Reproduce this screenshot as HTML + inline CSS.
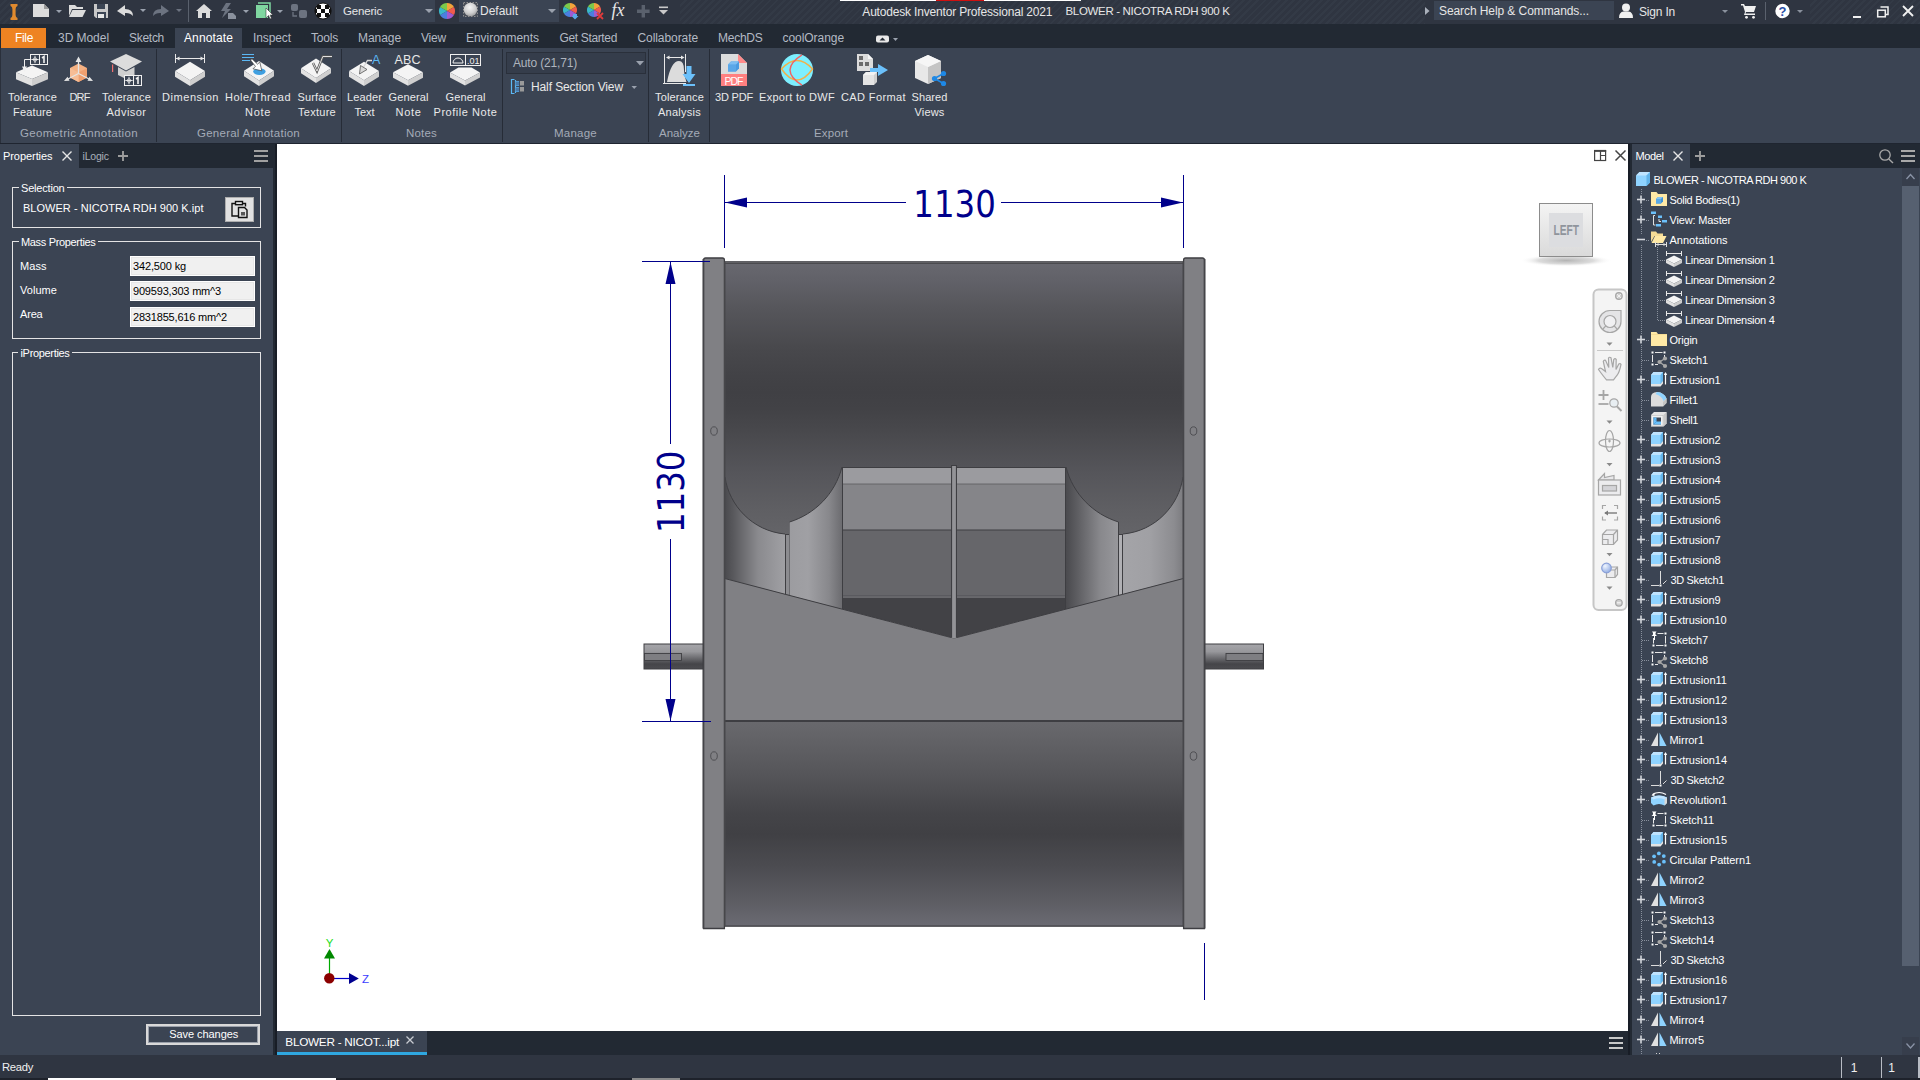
<!DOCTYPE html>
<html lang="en"><head><meta charset="utf-8"><title>Autodesk Inventor Professional 2021 - BLOWER - NICOTRA RDH 900 K</title>
<style>
html,body{margin:0;padding:0;background:#3b4453;overflow:hidden}
body{width:1920px;height:1080px;position:relative;font-family:"Liberation Sans",sans-serif}
.t{position:absolute;white-space:nowrap;display:block}
.r{position:absolute;display:block}
svg text{font-family:"Liberation Sans",sans-serif}
</style></head>
<body>
<div class="r" style="left:0px;top:0px;width:1920px;height:24px;background:#2f3541;"></div>
<div class="r" style="left:0;top:0;width:30px;height:24px;background:repeating-linear-gradient(135deg,#2f3541 0 3px,#333a46 3px 5px)"></div>
<div class="r" style="left:680px;top:0;width:745px;height:24px;background:repeating-linear-gradient(135deg,#2f3541 0 3px,#333a46 3px 5px)"></div>
<div class="r" style="left:1810px;top:0;width:110px;height:24px;background:repeating-linear-gradient(135deg,#2f3541 0 3px,#333a46 3px 5px)"></div>
<div class="r" style="left:840px;top:0px;width:241px;height:1px;background:#ffffff;"></div>
<div class="r" style="left:936px;top:0px;width:48px;height:1px;background:#d01010;"></div>
<svg class="r" style="left:0px;top:0px;" width="700" height="24" viewBox="0 0 700 24">
<g>
<path d="M10.5 4 H17.5 V6 Q15.6 6.6 15.6 9 V15 Q15.6 17.4 17.5 18 V20 H10.5 V18 Q12.4 17.4 12.4 15 V9 Q12.4 6.6 10.5 6Z" fill="#e08a2e"/>
<path d="M33 4 H44 L49 9 V17 H33Z" fill="#dcdcdc"/><path d="M44 4 L49 9 H44Z" fill="#9a9a9a"/>
<path d="M56 10 H62 L59 13Z" fill="#9aa1ad"/>
<path d="M69 5 H75 L77 7 H83 V9 H72 L69 16Z" fill="#dcdcdc"/><path d="M72.5 10 H86 L82.5 17 H69Z" fill="#dcdcdc"/>
<path d="M94 4 H108 V18 H96 L94 16Z" fill="#c8c8c8"/><rect x="97" y="4" width="8" height="5" fill="#3b4453"/><rect x="97" y="12" width="9" height="6" fill="#3b4453"/><rect x="98" y="14" width="6" height="4" fill="#e6e6e6"/>
<path d="M117 11 L125 5 V9 Q133 9 133 16 Q130 12.5 125 13 V16Z" fill="#dcdcdc"/>
<path d="M140 9 H146 L143 12Z" fill="#9aa1ad"/>
<path d="M169 11 L161 5 V9 Q153 9 153 16 Q156 12.5 161 13 V16Z" fill="#6c7380"/>
<path d="M176 9 H182 L179 12Z" fill="#6c7380"/>
<rect x="188" y="0" width="1" height="22" fill="#5a616d"/>
<path d="M196 11 L204 4 L212 11 H210 V18 H206 V13 H202 V18 H198 V11Z" fill="#dcdcdc"/>
<path d="M226 3 H231 L227 9 H231 L222 18 L225 11 H221Z" fill="#6c7380"/><path d="M228 13 H233 L236 16 V19 H228Z" fill="#8a919d"/>
<path d="M243 10 H249 L246 13Z" fill="#9aa1ad"/>
<rect x="256" y="5" width="12" height="13" fill="#7fd6a0"/><path d="M258 3 H270 V16" stroke="#7fd6a0" fill="none" stroke-width="1.5"/>
<path d="M266 8 L266 18 L268.5 15.5 L270 19 L271.5 18.3 L270 15 L273 15Z" fill="#ffffff" stroke="#222" stroke-width="0.5"/>
<path d="M277 10 H283 L280 13Z" fill="#9aa1ad"/>
<rect x="291" y="4" width="7" height="7" rx="2" fill="#6c7380"/><rect x="299" y="10" width="8" height="8" rx="2" fill="#6c7380"/><path d="M293 12 V16 H297" stroke="#6c7380" fill="none" stroke-width="1.3"/>
<circle cx="323" cy="11" r="8" fill="#ffffff"/><circle cx="323" cy="11" r="8" fill="none" stroke="#111" stroke-width="1.2"/>
<g fill="#111"><rect x="317" y="5" width="4" height="4"/><rect x="325" y="5" width="4" height="4"/><rect x="321" y="9" width="4" height="4"/><rect x="317" y="13" width="4" height="4"/><rect x="325" y="13" width="4" height="4"/><rect x="315" y="9" width="2" height="4"/><rect x="329" y="9" width="2" height="4"/></g>
</g></svg>
<div class="r" style="left:335px;top:0px;width:100px;height:22px;background:#3b4453;"></div>
<span class="t" style="left:343.00px;top:5.77px;font-size:11.5px;line-height:11.5px;color:#e6e6e6;letter-spacing:-0.181px;">Generic</span>
<div class="r" style="left:459px;top:0px;width:100px;height:22px;background:#3b4453;"></div>
<span class="t" style="left:480.00px;top:5.34px;font-size:12px;line-height:12px;color:#e6e6e6;letter-spacing:-0.003px;">Default</span>
<svg class="r" style="left:420px;top:0px;" width="250" height="24" viewBox="420 0 250 24">
<path d="M425 9 H433 L429 13Z" fill="#9aa1ad"/>
<g transform="translate(447,11)">
<path d="M0 0 L0 -8 A8 8 0 0 1 6.93 -4Z" fill="#f2a33a"/>
<path d="M0 0 L6.93 -4 A8 8 0 0 1 6.93 4Z" fill="#ef5b4c"/>
<path d="M0 0 L6.93 4 A8 8 0 0 1 0 8Z" fill="#a05ad0"/>
<path d="M0 0 L0 8 A8 8 0 0 1 -6.93 4Z" fill="#4a7fe0"/>
<path d="M0 0 L-6.93 4 A8 8 0 0 1 -6.93 -4Z" fill="#39b8c8"/>
<path d="M0 0 L-6.93 -4 A8 8 0 0 1 0 -8Z" fill="#7cc84a"/>
</g>
<defs><radialGradient id="gDef" cx="0.45" cy="0.35" r="0.7"><stop offset="0" stop-color="#f4f4f4"/><stop offset="0.6" stop-color="#cfcfcf"/><stop offset="1" stop-color="#9a9a9a"/></radialGradient></defs><rect x="463.500" y="2.500" width="14" height="14" fill="#4a4f58" stroke="#8e8e8e" stroke-width="1" stroke-dasharray="1.500 1.500"/><circle cx="470.500" cy="9.500" r="6.800" fill="url(#gDef)"/>
<path d="M548 9 H556 L552 13Z" fill="#9aa1ad"/>
<g transform="translate(570,10)">
<path d="M0 0 L0 -7 A7 7 0 0 1 6.06 -3.5Z" fill="#f2a33a"/><path d="M0 0 L6.06 -3.5 A7 7 0 0 1 6.06 3.5Z" fill="#ef5b4c"/><path d="M0 0 L6.06 3.5 A7 7 0 0 1 0 7Z" fill="#a05ad0"/><path d="M0 0 L0 7 A7 7 0 0 1 -6.06 3.5Z" fill="#4a7fe0"/><path d="M0 0 L-6.06 3.5 A7 7 0 0 1 -6.06 -3.5Z" fill="#39b8c8"/><path d="M0 0 L-6.06 -3.5 A7 7 0 0 1 0 -7Z" fill="#7cc84a"/>
</g>
<path d="M573 14 H577 V16 H578.5 L575 19.5 L571.5 16 H573Z" fill="#5aa7e8"/>
<g transform="translate(594,10)">
<path d="M0 0 L0 -7 A7 7 0 0 1 6.06 -3.5Z" fill="#f2a33a"/><path d="M0 0 L6.06 -3.5 A7 7 0 0 1 6.06 3.5Z" fill="#ef5b4c"/><path d="M0 0 L6.06 3.5 A7 7 0 0 1 0 7Z" fill="#a05ad0"/><path d="M0 0 L0 7 A7 7 0 0 1 -6.06 3.5Z" fill="#4a7fe0"/><path d="M0 0 L-6.06 3.5 A7 7 0 0 1 -6.06 -3.5Z" fill="#39b8c8"/><path d="M0 0 L-6.06 -3.5 A7 7 0 0 1 0 -7Z" fill="#7cc84a"/>
</g>
<path d="M597 13 L603 19 M603 13 L597 19" stroke="#e03a3a" stroke-width="1.8"/>
<text x="611.500" y="16" font-size="18" style="font-family:&quot;Liberation Serif&quot;,serif;font-style:italic" fill="#e6e6e6">fx</text>
<path d="M637 9.600 H641.600 V5 H645 V9.600 H649.600 V13 H645 V17.600 H641.600 V13 H637Z" fill="#5a616d"/>
<rect x="659" y="6.500" width="9" height="1.600" fill="#c9c9c9"/><path d="M659 10 H668 L663.500 14.500Z" fill="#c9c9c9"/>
</svg>
<span class="t" style="left:862.30px;top:5.84px;font-size:12px;line-height:12px;color:#e6e6e6;letter-spacing:-0.175px;">Autodesk Inventor Professional 2021</span>
<span class="t" style="left:1065.50px;top:6.27px;font-size:11.5px;line-height:11.5px;color:#e6e6e6;letter-spacing:-0.328px;">BLOWER - NICOTRA RDH 900 K</span>
<div class="r" style="left:1434px;top:1px;width:180px;height:19px;background:#3b4453;"></div>
<span class="t" style="left:1439.00px;top:4.84px;font-size:12px;line-height:12px;color:#e6e6e6;letter-spacing:-0.083px;">Search Help &amp; Commands...</span>
<span class="t" style="left:1639.00px;top:5.84px;font-size:12px;line-height:12px;color:#e6e6e6;letter-spacing:-0.195px;">Sign In</span>
<svg class="r" style="left:1415px;top:0px;" width="505" height="24" viewBox="1415 0 505 24">
<path d="M1425 7 L1429.5 11 L1425 15Z" fill="#aab0bb"/>
<circle cx="1626" cy="7.5" r="4" fill="#f0f0f0"/><path d="M1619 18 Q1619 12 1623.5 11.5 H1628.5 Q1633 12 1633 18Z" fill="#f0f0f0"/>
<path d="M1722 10 H1728 L1725 13Z" fill="#8a919d"/>
<path d="M1741 4 H1744 L1745 6 H1756 L1754 12 H1746 L1745.5 13.5 H1755 V15 H1744 L1745 12 L1743 5.5 H1741Z" fill="#f0f0f0"/><circle cx="1746.5" cy="17.3" r="1.4" fill="#f0f0f0"/><circle cx="1753.5" cy="17.3" r="1.4" fill="#f0f0f0"/>
<rect x="1765" y="2" width="1" height="18" fill="#5a616d"/>
<circle cx="1782.5" cy="11" r="7.2" fill="#ffffff"/>
<text x="1782.5" y="15.6" font-size="13" font-weight="bold" text-anchor="middle" fill="#2b4fa8">?</text>
<path d="M1797 10 H1803 L1800 13Z" fill="#8a919d"/>
<rect x="1853" y="16" width="8" height="2" fill="#f0f0f0"/>
<path d="M1880.5 7 H1888 V14.5 H1885.5" stroke="#f0f0f0" stroke-width="1.5" fill="none"/><rect x="1877.7" y="10.2" width="7.6" height="6.6" stroke="#f0f0f0" stroke-width="1.5" fill="none"/>
<path d="M1903 6 L1913 16 M1913 6 L1903 16" stroke="#f0f0f0" stroke-width="1.9"/>
</svg>
<div class="r" style="left:0px;top:24px;width:1920px;height:24px;background:#222933;"></div>
<div class="r" style="left:1px;top:28px;width:45px;height:20px;background:#ee8322;"></div>
<div class="r" style="left:175px;top:28px;width:67px;height:20px;background:#3b4453;"></div>
<span class="t" style="left:15.00px;top:31.84px;font-size:12px;line-height:12px;color:#ffffff;letter-spacing:-0.334px;">File</span>
<span class="t" style="left:58.00px;top:31.84px;font-size:12px;line-height:12px;color:#b4bac4;letter-spacing:-0.045px;">3D Model</span>
<span class="t" style="left:129.00px;top:31.84px;font-size:12px;line-height:12px;color:#b4bac4;letter-spacing:-0.281px;">Sketch</span>
<span class="t" style="left:184.00px;top:31.84px;font-size:12px;line-height:12px;color:#ffffff;letter-spacing:0.120px;">Annotate</span>
<span class="t" style="left:253.00px;top:31.84px;font-size:12px;line-height:12px;color:#b4bac4;letter-spacing:-0.099px;">Inspect</span>
<span class="t" style="left:311.00px;top:31.84px;font-size:12px;line-height:12px;color:#b4bac4;letter-spacing:-0.203px;">Tools</span>
<span class="t" style="left:358.00px;top:31.84px;font-size:12px;line-height:12px;color:#b4bac4;letter-spacing:-0.061px;">Manage</span>
<span class="t" style="left:421.00px;top:31.84px;font-size:12px;line-height:12px;color:#b4bac4;letter-spacing:-0.199px;">View</span>
<span class="t" style="left:466.00px;top:31.84px;font-size:12px;line-height:12px;color:#b4bac4;letter-spacing:-0.031px;">Environments</span>
<span class="t" style="left:559.50px;top:31.84px;font-size:12px;line-height:12px;color:#b4bac4;letter-spacing:-0.352px;">Get Started</span>
<span class="t" style="left:637.50px;top:31.84px;font-size:12px;line-height:12px;color:#b4bac4;letter-spacing:-0.080px;">Collaborate</span>
<span class="t" style="left:718.00px;top:31.84px;font-size:12px;line-height:12px;color:#b4bac4;letter-spacing:-0.252px;">MechDS</span>
<span class="t" style="left:782.50px;top:31.84px;font-size:12px;line-height:12px;color:#b4bac4;letter-spacing:-0.054px;">coolOrange</span>
<svg class="r" style="left:870px;top:30px;" width="34" height="16" viewBox="0 0 34 16"><rect x="6" y="5.5" width="13" height="7" rx="2" fill="#e8e8e8"/><path d="M9.5 10.5 L12.5 7.5 L15.5 10.5Z" fill="#222933"/><path d="M23 8 L28 8 L25.5 11Z" fill="#9aa1ad"/></svg>
<div class="r" style="left:0px;top:48px;width:1920px;height:95px;background:#3b4453;"></div>
<div class="r" style="left:0px;top:48px;width:1px;height:95px;background:#2a303b;"></div>
<div class="r" style="left:0px;top:143px;width:1920px;height:1px;background:#1f2530;"></div>
<div class="r" style="left:156px;top:49px;width:1px;height:93px;background:#262c37;"></div>
<div class="r" style="left:341px;top:49px;width:1px;height:93px;background:#262c37;"></div>
<div class="r" style="left:502px;top:49px;width:1px;height:93px;background:#262c37;"></div>
<div class="r" style="left:648px;top:49px;width:1px;height:93px;background:#262c37;"></div>
<div class="r" style="left:709px;top:49px;width:1px;height:93px;background:#262c37;"></div>
<span class="t" style="left:8.00px;top:91.59px;font-size:11px;line-height:11px;color:#e9e9e9;letter-spacing:0.145px;">Tolerance</span>
<span class="t" style="left:13.00px;top:106.59px;font-size:11px;line-height:11px;color:#e9e9e9;letter-spacing:0.156px;">Feature</span>
<span class="t" style="left:69.50px;top:91.59px;font-size:11px;line-height:11px;color:#e9e9e9;letter-spacing:-0.869px;">DRF</span>
<span class="t" style="left:102.00px;top:91.59px;font-size:11px;line-height:11px;color:#e9e9e9;letter-spacing:0.145px;">Tolerance</span>
<span class="t" style="left:106.50px;top:106.59px;font-size:11px;line-height:11px;color:#e9e9e9;letter-spacing:0.474px;">Advisor</span>
<span class="t" style="left:162.00px;top:91.59px;font-size:11px;line-height:11px;color:#e9e9e9;letter-spacing:0.559px;">Dimension</span>
<span class="t" style="left:225.00px;top:91.59px;font-size:11px;line-height:11px;color:#e9e9e9;letter-spacing:0.497px;">Hole/Thread</span>
<span class="t" style="left:245.00px;top:106.59px;font-size:11px;line-height:11px;color:#e9e9e9;letter-spacing:0.691px;">Note</span>
<span class="t" style="left:297.50px;top:91.59px;font-size:11px;line-height:11px;color:#e9e9e9;letter-spacing:0.156px;">Surface</span>
<span class="t" style="left:298.00px;top:106.59px;font-size:11px;line-height:11px;color:#e9e9e9;letter-spacing:0.275px;">Texture</span>
<span class="t" style="left:347.00px;top:91.59px;font-size:11px;line-height:11px;color:#e9e9e9;letter-spacing:0.124px;">Leader</span>
<span class="t" style="left:354.50px;top:106.59px;font-size:11px;line-height:11px;color:#e9e9e9;letter-spacing:-0.044px;">Text</span>
<span class="t" style="left:388.50px;top:91.59px;font-size:11px;line-height:11px;color:#e9e9e9;letter-spacing:0.124px;">General</span>
<span class="t" style="left:395.50px;top:106.59px;font-size:11px;line-height:11px;color:#e9e9e9;letter-spacing:0.691px;">Note</span>
<span class="t" style="left:445.50px;top:91.59px;font-size:11px;line-height:11px;color:#e9e9e9;letter-spacing:0.124px;">General</span>
<span class="t" style="left:433.50px;top:106.59px;font-size:11px;line-height:11px;color:#e9e9e9;letter-spacing:0.544px;">Profile Note</span>
<span class="t" style="left:655.00px;top:91.59px;font-size:11px;line-height:11px;color:#e9e9e9;letter-spacing:0.145px;">Tolerance</span>
<span class="t" style="left:658.00px;top:106.59px;font-size:11px;line-height:11px;color:#e9e9e9;letter-spacing:0.255px;">Analysis</span>
<span class="t" style="left:715.00px;top:91.59px;font-size:11px;line-height:11px;color:#e9e9e9;letter-spacing:-0.186px;">3D PDF</span>
<span class="t" style="left:759.00px;top:91.59px;font-size:11px;line-height:11px;color:#e9e9e9;letter-spacing:0.298px;">Export to DWF</span>
<span class="t" style="left:841.00px;top:91.59px;font-size:11px;line-height:11px;color:#e9e9e9;letter-spacing:0.388px;">CAD Format</span>
<span class="t" style="left:911.50px;top:91.59px;font-size:11px;line-height:11px;color:#e9e9e9;letter-spacing:0.088px;">Shared</span>
<span class="t" style="left:914.50px;top:106.59px;font-size:11px;line-height:11px;color:#e9e9e9;letter-spacing:0.171px;">Views</span>
<span class="t" style="left:20.00px;top:127.67px;font-size:11.5px;line-height:11.5px;color:#a4abb7;letter-spacing:0.370px;">Geometric Annotation</span>
<span class="t" style="left:197.00px;top:127.67px;font-size:11.5px;line-height:11.5px;color:#a4abb7;letter-spacing:0.252px;">General Annotation</span>
<span class="t" style="left:406.00px;top:127.67px;font-size:11.5px;line-height:11.5px;color:#a4abb7;letter-spacing:0.192px;">Notes</span>
<span class="t" style="left:554.00px;top:127.67px;font-size:11.5px;line-height:11.5px;color:#a4abb7;letter-spacing:0.240px;">Manage</span>
<span class="t" style="left:659.00px;top:127.67px;font-size:11.5px;line-height:11.5px;color:#a4abb7;letter-spacing:0.012px;">Analyze</span>
<span class="t" style="left:814.00px;top:127.67px;font-size:11.5px;line-height:11.5px;color:#a4abb7;letter-spacing:0.127px;">Export</span>
<div class="r" style="left:506px;top:52px;width:140px;height:22px;background:#2a303b;"></div>
<div class="r" style="left:507px;top:53px;width:138px;height:20px;background:#353d4b;"></div>
<span class="t" style="left:513.00px;top:57.34px;font-size:12px;line-height:12px;color:#aeb4be;letter-spacing:-0.170px;">Auto (21,71)</span>
<span class="t" style="left:531.00px;top:80.84px;font-size:12px;line-height:12px;color:#e9e9e9;letter-spacing:-0.108px;">Half Section View</span>
<svg class="r" style="left:500px;top:48px;" width="160" height="60" viewBox="500 48 160 60">
<path d="M636 61 H644 L640 65.5Z" fill="#9aa1ad"/>
<path d="M631.5 86 H637 L634.2 89Z" fill="#9aa1ad"/>
<g stroke="#5bb8f5" stroke-width="1.2" fill="none"><path d="M514.5 79.5 H511.5 V93.5 H514.5"/><path d="M515.5 80 V93"/><path d="M515.5 81.5 H518.5 V85.5 H515.5M515.5 87.5 H518.5 V91.5 H515.5"/></g>
<rect x="515.5" y="81.5" width="3.5" height="4" fill="#4a78a8"/><rect x="515.5" y="87.5" width="3.5" height="4" fill="#4a78a8"/>
<rect x="520" y="81" width="4" height="4.5" fill="#9a9a9a"/><rect x="520" y="87" width="4" height="4.5" fill="#9a9a9a"/>
</svg>
<svg class="r" style="left:0px;top:48px;" width="960" height="95" viewBox="0 48 960 95"><path d="M32 65.5 L48 72.25 L32 79 L16 72.25Z" fill="#f4f4f4"/><path d="M16 72.25 L32 79 V86 L16 79.25Z" fill="#e2e2e2"/><path d="M32 79 L48 72.25 V79.25 L32 86Z" fill="#cfcfcf"/><g stroke="#f0f0f0" fill="none" stroke-width="1"><rect x="30.5" y="54.5" width="17" height="10"/><path d="M39.5 54.5 V64.5"/><path d="M30.5 59.5 H24.5 V69"/><circle cx="35" cy="59.5" r="1.700" stroke-width="0.800"/><path d="M35 55.800 V63.200M31.300 59.5 H38.700" stroke-width="0.900"/><path d="M42 58 L44 56.500 V63" stroke-width="1.600"/></g><path d="M22 66.5 H27 L24.5 72Z" fill="#f0f0f0"/><path d="M78.5 63.5 L87 68 V77.5 L78.5 82 L70 77.5 V68Z" fill="#f4b183"/><path d="M78.5 72.5 L87 68 V77.5 L78.5 82Z" fill="#f0a070"/><path d="M78.5 72.5 L70 68 V77.5 L78.5 82Z" fill="#f7bd95"/><g stroke="#e4e4e4" stroke-width="1.3" fill="none"><path d="M78.5 73.5 V60M78.5 73.5 L67 79.5M78.5 73.5 L90 79.5"/></g><path d="M78.5 56.5 L81.5 62 H75.5Z M64 81 L67.5 76.8 L69.5 80.8Z M93 81 L89.5 76.8 L87.5 80.8Z" fill="#e4e4e4"/><path d="M126 54 L142 61.5 L126 70.5 L110 61.5Z" fill="#dcdcdc"/><path d="M118 67 V75 L126 79 L134.5 75 V67 L126 71.5Z" fill="#d0d0d0"/><rect x="112" y="64.5" width="1.2" height="7.5" fill="#f07070"/><g stroke="#f0f0f0" fill="#3b4453" stroke-width="1"><rect x="124.5" y="75.5" width="17" height="10"/><path d="M133.5 75.5 V85.5"/><circle cx="129" cy="80.5" r="1.700" stroke-width="0.800"/><path d="M129 76.800 V84.200M125.300 80.5 H132.700" stroke-width="0.900"/><path d="M136 79 L138 77.500 V84" stroke-width="1.600"/></g><path d="M190 61.75 L205 71.05 L190 80.35 L175 71.05Z" fill="#f4f4f4"/><path d="M175 71.05 L190 80.35 V85.95 L175 76.65Z" fill="#e2e2e2"/><path d="M190 80.35 L205 71.05 V76.65 L190 85.95Z" fill="#cfcfcf"/><g stroke="#e8e8e8" stroke-width="1" fill="none"><path d="M175.5 54 V63M204.5 54 V63M176 58.5 H204"/></g><path d="M176 58.5 L179.5 56.5 V60.5Z M204 58.5 L200.500 56.5 V60.5Z" fill="#e8e8e8"/><path d="M259 61 L274 70.7 L259 80.4 L244 70.7Z" fill="#f4f4f4"/><path d="M244 70.7 L259 80.4 V86 L244 76.3Z" fill="#e2e2e2"/><path d="M259 80.4 L274 70.7 V76.3 L259 86Z" fill="#cfcfcf"/><ellipse cx="259.400" cy="71.600" rx="6.200" ry="3.400" fill="#3f9fe0"/><g stroke="#5bb8f5" stroke-width="1"><path d="M242 54.5 H254M242 57.5 H254M242 60.5 H250"/></g><path d="M250.500 60 L252 58.800 L257.600 64.200 L259.800 62 L261.800 70.800 L253 68.800 L255.400 66.400 Z" fill="#ffffff" stroke="#444" stroke-width="0.700"/><path d="M316 58.6 L331 68.3 L316 78 L301 68.3Z" fill="#f4f4f4"/><path d="M301 68.3 L316 78 V83 L301 73.3Z" fill="#e2e2e2"/><path d="M316 78 L331 68.3 V73.3 L316 83Z" fill="#cfcfcf"/><path d="M313 63 L317 71.200 L322.800 56.500 H332" stroke="#555" stroke-width="2.400" fill="none"/><path d="M313 63 L317 71.200 L322.800 56.500 H332" stroke="#f0f0f0" stroke-width="0.900" fill="none"/><path d="M364 61.75 L379 71.05 L364 80.35 L349 71.05Z" fill="#f4f4f4"/><path d="M349 71.05 L364 80.35 V85.95 L349 76.65Z" fill="#e2e2e2"/><path d="M364 80.35 L379 71.05 V76.65 L364 85.95Z" fill="#cfcfcf"/><path d="M372 60.500 H367.500 L363 68" stroke="#d8d8d8" stroke-width="1.300" fill="none"/><path d="M359.500 74 L360.500 65.500 L367 69.500Z" fill="#d8d8d8" stroke="#555" stroke-width="0.800"/><text x="372" y="63.5" font-size="12.5" fill="#5bb8f5">A</text><text x="394.5" y="63.5" font-size="12.5" fill="#e8e8e8" textLength="26">ABC</text><path d="M408 64.25 L423 72.25 L408 80.25 L393 72.25Z" fill="#f4f4f4"/><path d="M393 72.25 L408 80.25 V85.85 L393 77.85Z" fill="#e2e2e2"/><path d="M408 80.25 L423 72.25 V77.85 L408 85.85Z" fill="#cfcfcf"/><path d="M458.500 67.400 H471.500 L480 72.400 L465 80.500 L450 72.400Z" fill="#f4f4f4"/><path d="M450 72.400 L465 80.500 V85.500 L450 77.400Z" fill="#e2e2e2"/><path d="M480 72.400 L465 80.500 V85.500 L480 77.400Z" fill="#cfcfcf"/><g stroke="#f0f0f0" fill="none" stroke-width="1"><rect x="450.500" y="54.5" width="30" height="11"/><path d="M465.500 54.5 V65.5"/><path d="M453 63 A5 5 0 0 1 463 63Z"/></g><text x="467" y="63.8" font-size="9" fill="#f0f0f0" textLength="12.5">.01</text><path d="M667 82 Q671 61 679 61 Q684 61 684 70 Q684 76 686.5 82Z" fill="#dcdcdc"/><g stroke="#e8e8e8" stroke-width="1" fill="none"><path d="M664.500 54 V83M685.500 54 V72M663 83.5 H686M667 57.500 H683"/></g><path d="M666 57.5 L669.5 55.500 V59.5Z M684.500 57.5 L681 55.5 V59.5Z" fill="#e8e8e8"/><path d="M686.500 66 H691.500 V74 H695.5 L689 83 L682.5 74 H686.500Z" fill="#6bc0fa"/><rect x="683" y="84" width="12" height="2" fill="#6bc0fa"/><path d="M721 54 H738 L747 63 V86 H721Z" fill="#dcdcdc"/><path d="M738 54 L747 63 H738Z" fill="#ff8a8a"/><rect x="721" y="74" width="26" height="12" fill="#ff8080"/><text x="734" y="84.5" font-size="10.5" fill="#ffffff" text-anchor="middle" textLength="19">PDF</text><path d="M728 64.5 L731 61.5 H739 V68.500 L736 71.500 H728Z" fill="#4a9ae0"/><path d="M728 64.500 H736 V71.500 H728Z" fill="#5aa7e8"/><path d="M728 64.500 L731 61.5 H739 L736 64.500Z" fill="#7cbdf2"/><circle cx="797" cy="70" r="16" fill="#7defff"/><path d="M781.500 69 Q797 52 812.500 69 Q797 91 781.500 69Z" fill="none" stroke="#f2b04a" stroke-width="1.500"/><path d="M802 54.800 Q778 70 802 85.200" fill="none" stroke="#f06464" stroke-width="1.500"/><path d="M805 56.500 Q800 62 803 67" fill="none" stroke="#f06464" stroke-width="0.010"/><path d="M857 54 H868 L873 59 V71 H857Z" fill="#dcdcdc"/><path d="M868 54 L873 59 H868Z" fill="#f6f6f6"/><g fill="#6a6a6a"><rect x="859" y="56" width="4" height="4"/><rect x="859" y="62" width="4" height="4"/><rect x="865" y="62" width="4" height="4"/></g><path d="M863 75 L866 72 H877 V82 L874 85 H863Z" fill="#cfcfcf"/><rect x="863" y="75" width="11" height="10" fill="#e4e4e4"/><path d="M863 75 L866 72 H877 L874 75Z" fill="#f2f2f2"/><path d="M870 68 H878 V64 L888 70 L878 76 V72 H870Z" fill="#6bc0fa"/><path d="M928 55 L941 61 V78 L928 84 L915 78 V61Z" fill="#e8e8e8"/><path d="M928 67 L941 61 V78 L928 84Z" fill="#c4c4c4"/><path d="M928 67 L915 61 L928 55 L941 61Z" fill="#f6f6f6"/><g stroke="#1e88e5" stroke-width="1.6" fill="none"><path d="M943.5 73.500 L934.500 78.5 L943.500 83.5"/></g><circle cx="943.5" cy="73.5" r="2.6" fill="#1e88e5"/><circle cx="934.500" cy="78.5" r="2.6" fill="#1e88e5"/><circle cx="943.5" cy="83.5" r="2.6" fill="#1e88e5"/></svg>
<div class="r" style="left:0px;top:144px;width:273px;height:911px;background:#3b4453;"></div>
<div class="r" style="left:273px;top:144px;width:2px;height:911px;background:#222933;"></div>
<div class="r" style="left:275px;top:144px;width:2px;height:911px;background:#181d26;"></div>
<div class="r" style="left:0px;top:144px;width:273px;height:24px;background:#222933;"></div>
<div class="r" style="left:0px;top:144px;width:79px;height:24px;background:#3b4453;"></div>
<span class="t" style="left:3.00px;top:150.69px;font-size:11px;line-height:11px;color:#ffffff;letter-spacing:-0.064px;">Properties</span>
<span class="t" style="left:82.50px;top:151.11px;font-size:10.5px;line-height:10.5px;color:#a9b0bc;letter-spacing:-0.206px;">iLogic</span>
<svg class="r" style="left:55px;top:146px;" width="80" height="20" viewBox="0 0 80 20"><path d="M7.5 5.500 L16.5 14.5 M16.5 5.5 L7.5 14.5" stroke="#e6e6e6" stroke-width="1.4"/><path d="M63 10 H73 M68 5 V15" stroke="#9c9c9c" stroke-width="1.900"/></svg>
<div class="r" style="left:254px;top:150px;width:14px;height:2px;background:#a0a0a0;"></div>
<div class="r" style="left:254px;top:155px;width:14px;height:2px;background:#a0a0a0;"></div>
<div class="r" style="left:254px;top:160px;width:14px;height:2px;background:#a0a0a0;"></div>
<div class="r" style="left:12px;top:187px;width:249px;height:41px;border:1px solid #e4e4e4;box-sizing:border-box"></div>
<div class="r" style="left:19px;top:187px;width:48px;height:1px;background:#3b4453;"></div>
<span class="t" style="left:21.00px;top:182.69px;font-size:11px;line-height:11px;color:#ffffff;letter-spacing:-0.195px;">Selection</span>
<div class="r" style="left:12px;top:241px;width:249px;height:98px;border:1px solid #e4e4e4;box-sizing:border-box"></div>
<div class="r" style="left:19px;top:241px;width:79px;height:1px;background:#3b4453;"></div>
<span class="t" style="left:21.00px;top:236.69px;font-size:11px;line-height:11px;color:#ffffff;letter-spacing:-0.332px;">Mass Properties</span>
<div class="r" style="left:12px;top:352px;width:249px;height:664px;border:1px solid #e4e4e4;box-sizing:border-box"></div>
<div class="r" style="left:18px;top:352px;width:54px;height:1px;background:#3b4453;"></div>
<span class="t" style="left:20.50px;top:347.69px;font-size:11px;line-height:11px;color:#ffffff;letter-spacing:-0.325px;">iProperties</span>
<span class="t" style="left:23.00px;top:202.69px;font-size:11px;line-height:11px;color:#ffffff;letter-spacing:0.026px;">BLOWER - NICOTRA RDH 900 K.ipt</span>
<div class="r" style="left:225px;top:197px;width:29px;height:25px;background:#e1e1e1;border:1px solid #adadad;box-sizing:border-box"></div>
<svg class="r" style="left:225px;top:197px;" width="29" height="25" viewBox="0 0 29 25"><g fill="none" stroke="#111" stroke-width="1.4"><path d="M11 6.500 H7 V19 H13"/><path d="M17 6.500 H20.5 V9.500"/><rect x="10.5" y="4.5" width="7" height="3.200" fill="#e1e1e1"/><path d="M13.5 10.500 H19.5 L22 13 V20.500 H13.5Z" fill="#e1e1e1"/></g><rect x="16" y="15" width="4" height="3.500" fill="#555"/></svg>
<span class="t" style="left:20.00px;top:260.69px;font-size:11px;line-height:11px;color:#ffffff;letter-spacing:0.055px;">Mass</span>
<div class="r" style="left:130px;top:256px;width:125px;height:20px;background:#f0f0f0;border:1px solid #ffffff;box-sizing:border-box;box-shadow:inset 0 0 0 1px #e6e6e6"></div>
<span class="t" style="left:133.00px;top:260.69px;font-size:11px;line-height:11px;color:#000000;letter-spacing:-0.144px;">342,500 kg</span>
<span class="t" style="left:20.00px;top:284.69px;font-size:11px;line-height:11px;color:#ffffff;letter-spacing:0.052px;">Volume</span>
<div class="r" style="left:130px;top:281px;width:125px;height:20px;background:#f0f0f0;border:1px solid #ffffff;box-sizing:border-box;box-shadow:inset 0 0 0 1px #e6e6e6"></div>
<span class="t" style="left:133.00px;top:285.69px;font-size:11px;line-height:11px;color:#000000;letter-spacing:-0.185px;">909593,303 mm^3</span>
<span class="t" style="left:20.00px;top:308.69px;font-size:11px;line-height:11px;color:#ffffff;letter-spacing:-0.184px;">Area</span>
<div class="r" style="left:130px;top:307px;width:125px;height:20px;background:#f0f0f0;border:1px solid #ffffff;box-sizing:border-box;box-shadow:inset 0 0 0 1px #e6e6e6"></div>
<span class="t" style="left:133.00px;top:311.69px;font-size:11px;line-height:11px;color:#000000;letter-spacing:-0.181px;">2831855,616 mm^2</span>
<div class="r" style="left:146px;top:1024px;width:114px;height:21px;border:2px solid #d9d9d9;box-sizing:border-box;background:#3b4453;box-shadow:inset 0 0 0 1px #9aa0aa"></div>
<span class="t" style="left:169.20px;top:1028.69px;font-size:11px;line-height:11px;color:#ffffff;letter-spacing:-0.060px;">Save changes</span>
<div class="r" style="left:1628px;top:144px;width:2px;height:911px;background:#181d26;"></div>
<div class="r" style="left:1630px;top:144px;width:2px;height:911px;background:#222933;"></div>
<div class="r" style="left:1632px;top:144px;width:288px;height:911px;background:#3b4453;"></div>
<div class="r" style="left:1632px;top:144px;width:288px;height:24px;background:#222933;"></div>
<div class="r" style="left:1632px;top:144px;width:58px;height:24px;background:#3b4453;"></div>
<span class="t" style="left:1635.60px;top:150.69px;font-size:11px;line-height:11px;color:#ffffff;letter-spacing:-0.432px;">Model</span>
<svg class="r" style="left:1632px;top:144px;" width="288" height="24" viewBox="1632 144 288 24"><path d="M1673.500 151.500 L1682.500 160.500 M1682.500 151.500 L1673.500 160.500" stroke="#e6e6e6" stroke-width="1.4"/><path d="M1695 156 H1705 M1700 151 V161" stroke="#9c9c9c" stroke-width="1.900"/><circle cx="1885" cy="155" r="5.200" fill="none" stroke="#a8a8a8" stroke-width="1.3"/><path d="M1888.800 159 L1893 163" stroke="#a8a8a8" stroke-width="1.4"/></svg>
<div class="r" style="left:1901px;top:150px;width:14px;height:2px;background:#a8a8a8;"></div>
<div class="r" style="left:1901px;top:155px;width:14px;height:2px;background:#a8a8a8;"></div>
<div class="r" style="left:1901px;top:160px;width:14px;height:2px;background:#a8a8a8;"></div>
<div class="r" style="left:1902px;top:168px;width:17px;height:18px;background:#373e4c;"></div>
<div class="r" style="left:1902px;top:186px;width:17px;height:780px;background:#566070;"></div>
<svg class="r" style="left:1902px;top:168px;" width="17" height="18" viewBox="0 0 17 18"><path d="M4.500 11 L8.500 6.500 L12.500 11" fill="none" stroke="#8a93a6" stroke-width="1.3"/></svg>
<div class="r" style="left:1902px;top:1037px;width:17px;height:18px;background:#373e4c;"></div>
<svg class="r" style="left:1902px;top:1037px;" width="17" height="18" viewBox="0 0 17 18"><path d="M4.500 6.500 L8.500 11 L12.500 6.500" fill="none" stroke="#8a93a6" stroke-width="1.3"/></svg>
<span class="t" style="left:1653.50px;top:174.69px;font-size:11px;line-height:11px;color:#ffffff;letter-spacing:-0.463px;">BLOWER - NICOTRA RDH 900 K</span>
<span class="t" style="left:1669.50px;top:194.69px;font-size:11px;line-height:11px;color:#ffffff;letter-spacing:-0.306px;">Solid Bodies(1)</span>
<span class="t" style="left:1669.50px;top:214.69px;font-size:11px;line-height:11px;color:#ffffff;letter-spacing:-0.156px;">View: Master</span>
<span class="t" style="left:1669.50px;top:234.69px;font-size:11px;line-height:11px;color:#ffffff;letter-spacing:-0.009px;">Annotations</span>
<span class="t" style="left:1685.00px;top:254.69px;font-size:11px;line-height:11px;color:#ffffff;letter-spacing:-0.293px;">Linear Dimension 1</span>
<span class="t" style="left:1685.00px;top:274.69px;font-size:11px;line-height:11px;color:#ffffff;letter-spacing:-0.293px;">Linear Dimension 2</span>
<span class="t" style="left:1685.00px;top:294.69px;font-size:11px;line-height:11px;color:#ffffff;letter-spacing:-0.293px;">Linear Dimension 3</span>
<span class="t" style="left:1685.00px;top:314.69px;font-size:11px;line-height:11px;color:#ffffff;letter-spacing:-0.293px;">Linear Dimension 4</span>
<span class="t" style="left:1669.50px;top:334.69px;font-size:11px;line-height:11px;color:#ffffff;letter-spacing:-0.224px;">Origin</span>
<span class="t" style="left:1669.50px;top:354.69px;font-size:11px;line-height:11px;color:#ffffff;letter-spacing:-0.178px;">Sketch1</span>
<span class="t" style="left:1669.50px;top:374.69px;font-size:11px;line-height:11px;color:#ffffff;letter-spacing:-0.097px;">Extrusion1</span>
<span class="t" style="left:1669.50px;top:394.69px;font-size:11px;line-height:11px;color:#ffffff;letter-spacing:-0.120px;">Fillet1</span>
<span class="t" style="left:1669.50px;top:414.69px;font-size:11px;line-height:11px;color:#ffffff;letter-spacing:-0.346px;">Shell1</span>
<span class="t" style="left:1669.50px;top:434.69px;font-size:11px;line-height:11px;color:#ffffff;letter-spacing:-0.097px;">Extrusion2</span>
<span class="t" style="left:1669.50px;top:454.69px;font-size:11px;line-height:11px;color:#ffffff;letter-spacing:-0.097px;">Extrusion3</span>
<span class="t" style="left:1669.50px;top:474.69px;font-size:11px;line-height:11px;color:#ffffff;letter-spacing:-0.097px;">Extrusion4</span>
<span class="t" style="left:1669.50px;top:494.69px;font-size:11px;line-height:11px;color:#ffffff;letter-spacing:-0.097px;">Extrusion5</span>
<span class="t" style="left:1669.50px;top:514.69px;font-size:11px;line-height:11px;color:#ffffff;letter-spacing:-0.097px;">Extrusion6</span>
<span class="t" style="left:1669.50px;top:534.69px;font-size:11px;line-height:11px;color:#ffffff;letter-spacing:-0.097px;">Extrusion7</span>
<span class="t" style="left:1669.50px;top:554.69px;font-size:11px;line-height:11px;color:#ffffff;letter-spacing:-0.097px;">Extrusion8</span>
<span class="t" style="left:1670.50px;top:574.69px;font-size:11px;line-height:11px;color:#ffffff;letter-spacing:-0.336px;">3D Sketch1</span>
<span class="t" style="left:1669.50px;top:594.69px;font-size:11px;line-height:11px;color:#ffffff;letter-spacing:-0.097px;">Extrusion9</span>
<span class="t" style="left:1669.50px;top:614.69px;font-size:11px;line-height:11px;color:#ffffff;letter-spacing:-0.099px;">Extrusion10</span>
<span class="t" style="left:1669.50px;top:634.69px;font-size:11px;line-height:11px;color:#ffffff;letter-spacing:-0.178px;">Sketch7</span>
<span class="t" style="left:1669.50px;top:654.69px;font-size:11px;line-height:11px;color:#ffffff;letter-spacing:-0.178px;">Sketch8</span>
<span class="t" style="left:1669.50px;top:674.69px;font-size:11px;line-height:11px;color:#ffffff;letter-spacing:0.021px;">Extrusion11</span>
<span class="t" style="left:1669.50px;top:694.69px;font-size:11px;line-height:11px;color:#ffffff;letter-spacing:-0.054px;">Extrusion12</span>
<span class="t" style="left:1669.50px;top:714.69px;font-size:11px;line-height:11px;color:#ffffff;letter-spacing:-0.054px;">Extrusion13</span>
<span class="t" style="left:1669.50px;top:734.69px;font-size:11px;line-height:11px;color:#ffffff;letter-spacing:-0.048px;">Mirror1</span>
<span class="t" style="left:1669.50px;top:754.69px;font-size:11px;line-height:11px;color:#ffffff;letter-spacing:-0.054px;">Extrusion14</span>
<span class="t" style="left:1670.50px;top:774.69px;font-size:11px;line-height:11px;color:#ffffff;letter-spacing:-0.336px;">3D Sketch2</span>
<span class="t" style="left:1669.50px;top:794.69px;font-size:11px;line-height:11px;color:#ffffff;letter-spacing:-0.054px;">Revolution1</span>
<span class="t" style="left:1669.50px;top:814.69px;font-size:11px;line-height:11px;color:#ffffff;letter-spacing:-0.069px;">Sketch11</span>
<span class="t" style="left:1669.50px;top:834.69px;font-size:11px;line-height:11px;color:#ffffff;letter-spacing:-0.054px;">Extrusion15</span>
<span class="t" style="left:1669.50px;top:854.69px;font-size:11px;line-height:11px;color:#ffffff;letter-spacing:-0.061px;">Circular Pattern1</span>
<span class="t" style="left:1669.50px;top:874.69px;font-size:11px;line-height:11px;color:#ffffff;letter-spacing:-0.048px;">Mirror2</span>
<span class="t" style="left:1669.50px;top:894.69px;font-size:11px;line-height:11px;color:#ffffff;letter-spacing:-0.048px;">Mirror3</span>
<span class="t" style="left:1669.50px;top:914.69px;font-size:11px;line-height:11px;color:#ffffff;letter-spacing:-0.171px;">Sketch13</span>
<span class="t" style="left:1669.50px;top:934.69px;font-size:11px;line-height:11px;color:#ffffff;letter-spacing:-0.171px;">Sketch14</span>
<span class="t" style="left:1670.50px;top:954.69px;font-size:11px;line-height:11px;color:#ffffff;letter-spacing:-0.336px;">3D Sketch3</span>
<span class="t" style="left:1669.50px;top:974.69px;font-size:11px;line-height:11px;color:#ffffff;letter-spacing:-0.054px;">Extrusion16</span>
<span class="t" style="left:1669.50px;top:994.69px;font-size:11px;line-height:11px;color:#ffffff;letter-spacing:-0.054px;">Extrusion17</span>
<span class="t" style="left:1669.50px;top:1014.69px;font-size:11px;line-height:11px;color:#ffffff;letter-spacing:-0.048px;">Mirror4</span>
<span class="t" style="left:1669.50px;top:1034.69px;font-size:11px;line-height:11px;color:#ffffff;letter-spacing:-0.048px;">Mirror5</span>
<svg class="r" style="left:1632px;top:168px;" width="270" height="887" viewBox="1632 168 270 887"><path d="M1641.500 189 V1055" stroke="#8a919d" stroke-width="1" stroke-dasharray="1 1"/><path d="M1657.500 247 V320" stroke="#8a919d" stroke-width="1" stroke-dasharray="1 1"/><g transform="translate(1636,171)"><path d="M0 4.500 L3.500 1 H14 V11.500 L10.500 15 H0Z" fill="#8fd3ff"/><path d="M0 4.500 L3.500 1 H14 L10.500 4.500Z" fill="#bfe4ff"/><path d="M10.500 4.500 L14 1 V11.500 L10.500 15Z" fill="#62b4ea"/></g><rect x="1636" y="194" width="11" height="11" fill="#3b4453"/><path d="M1646 200.5 H1650" stroke="#8a919d" stroke-width="1" stroke-dasharray="1 1"/><path d="M1637 199.5 H1645" stroke="#d4d7dc" stroke-width="1.600"/><path d="M1641 195.5 V203.5" stroke="#d4d7dc" stroke-width="1.600"/><g transform="translate(1651,191)"><path d="M0 1 H5.500 L7 3 H16 V15 H0Z" fill="#ffe9a6"/><path d="M5 8 L7 6 H12 V10.500 L10 12.500 H5Z" fill="#3f93d6"/><path d="M5 8 H10 V12.500 H5Z" fill="#5aa9e6"/><path d="M5 8 L7 6 H12 L10 8Z" fill="#86c4f2"/></g><rect x="1636" y="214" width="11" height="11" fill="#3b4453"/><path d="M1646 220.5 H1650" stroke="#8a919d" stroke-width="1" stroke-dasharray="1 1"/><path d="M1637 219.5 H1645" stroke="#d4d7dc" stroke-width="1.600"/><path d="M1641 215.5 V223.5" stroke="#d4d7dc" stroke-width="1.600"/><g transform="translate(1651,211)"><rect x="0" y="0.500" width="5" height="2.500" fill="#6bc0fa"/><rect x="7" y="4.500" width="4" height="2.500" fill="#6bc0fa"/><rect x="11" y="9" width="5" height="2.500" fill="#6bc0fa"/><rect x="5" y="13" width="5" height="2.500" fill="#6bc0fa"/><path d="M4 4.500 H2.500 V14 H4.500" stroke="#e0e0e0" fill="none" stroke-width="1"/><path d="M8 8 V10.500 H10" stroke="#e0e0e0" fill="none" stroke-width="1"/></g><rect x="1636" y="234" width="11" height="11" fill="#3b4453"/><path d="M1646 240.5 H1650" stroke="#8a919d" stroke-width="1" stroke-dasharray="1 1"/><path d="M1637 239.5 H1645" stroke="#d4d7dc" stroke-width="1.600"/><g transform="translate(1651,231)"><path d="M0 0.500 H5 L6.500 2.500 H12 V5 H3.500 L0 11Z" fill="#f5dc96"/><path d="M4 5 H15.500 L12 12 H0.500Z" fill="#ffe9a6"/><g stroke="#e0e0e0" stroke-width="1" fill="none"><path d="M4.500 11 V16M15.500 11 V16M5 13.500 H15"/></g><path d="M5 13.500 L7.500 12 V15Z M15 13.500 L12.500 12 V15Z" fill="#e0e0e0"/></g><path d="M1658 260.5 H1666" stroke="#8a919d" stroke-width="1" stroke-dasharray="1 1"/><g transform="translate(1666,251)"><g stroke="#e8e8e8" stroke-width="1" fill="none"><path d="M0.500 0 V5M15.500 0 V5M1 2.500 H15"/></g><path d="M8 4.500 L16 8.500 L8 12.500 L0 8.500Z" fill="#f4f4f4"/><path d="M0 8.500 L8 12.500 V16 L0 12Z" fill="#e0e0e0"/><path d="M16 8.500 L8 12.500 V16 L16 12Z" fill="#cdcdcd"/></g><path d="M1658 280.5 H1666" stroke="#8a919d" stroke-width="1" stroke-dasharray="1 1"/><g transform="translate(1666,271)"><g stroke="#e8e8e8" stroke-width="1" fill="none"><path d="M0.500 0 V5M15.500 0 V5M1 2.500 H15"/></g><path d="M8 4.500 L16 8.500 L8 12.500 L0 8.500Z" fill="#f4f4f4"/><path d="M0 8.500 L8 12.500 V16 L0 12Z" fill="#e0e0e0"/><path d="M16 8.500 L8 12.500 V16 L16 12Z" fill="#cdcdcd"/></g><path d="M1658 300.5 H1666" stroke="#8a919d" stroke-width="1" stroke-dasharray="1 1"/><g transform="translate(1666,291)"><g stroke="#e8e8e8" stroke-width="1" fill="none"><path d="M0.500 0 V5M15.500 0 V5M1 2.500 H15"/></g><path d="M8 4.500 L16 8.500 L8 12.500 L0 8.500Z" fill="#f4f4f4"/><path d="M0 8.500 L8 12.500 V16 L0 12Z" fill="#e0e0e0"/><path d="M16 8.500 L8 12.500 V16 L16 12Z" fill="#cdcdcd"/></g><path d="M1658 320.5 H1666" stroke="#8a919d" stroke-width="1" stroke-dasharray="1 1"/><g transform="translate(1666,311)"><g stroke="#e8e8e8" stroke-width="1" fill="none"><path d="M0.500 0 V5M15.500 0 V5M1 2.500 H15"/></g><path d="M8 4.500 L16 8.500 L8 12.500 L0 8.500Z" fill="#f4f4f4"/><path d="M0 8.500 L8 12.500 V16 L0 12Z" fill="#e0e0e0"/><path d="M16 8.500 L8 12.500 V16 L16 12Z" fill="#cdcdcd"/></g><rect x="1636" y="334" width="11" height="11" fill="#3b4453"/><path d="M1646 340.5 H1650" stroke="#8a919d" stroke-width="1" stroke-dasharray="1 1"/><path d="M1637 339.5 H1645" stroke="#d4d7dc" stroke-width="1.600"/><path d="M1641 335.5 V343.5" stroke="#d4d7dc" stroke-width="1.600"/><g transform="translate(1651,331)"><path d="M0 1 H5.500 L7 3 H16 V15 H0Z" fill="#ffe9a6"/><path d="M0 3.500 H16" stroke="#f0d48a" stroke-width="0.600"/></g><path d="M1642 360.5 H1650" stroke="#8a919d" stroke-width="1" stroke-dasharray="1 1"/><g transform="translate(1651,351)"><g stroke="#e8e8e8" stroke-width="1" fill="none"><path d="M4 1.500 H11.500 M1.500 4 V11 M13.500 4 V7 M4 13.500 H7"/></g><g fill="#ffffff"><rect x="0.500" y="0.500" width="2" height="2"/><rect x="12.500" y="0.500" width="2" height="2"/><rect x="0.500" y="12.500" width="2" height="2"/></g><path d="M14 7.500 L8.500 11 L14 15" stroke="#a8a8a8" stroke-width="1.300" fill="none"/><circle cx="14" cy="7.500" r="2.100" fill="#a8a8a8"/><circle cx="8.500" cy="11" r="2.100" fill="#a8a8a8"/><circle cx="14" cy="15" r="2.100" fill="#a8a8a8"/></g><rect x="1636" y="374" width="11" height="11" fill="#3b4453"/><path d="M1646 380.5 H1650" stroke="#8a919d" stroke-width="1" stroke-dasharray="1 1"/><path d="M1637 379.5 H1645" stroke="#d4d7dc" stroke-width="1.600"/><path d="M1641 375.5 V383.5" stroke="#d4d7dc" stroke-width="1.600"/><g transform="translate(1651,371)"><path d="M0 4 L2.500 1 H12 V10 L9.500 13 H0Z" fill="#8fd3ff"/><path d="M0 4 L2.500 1 H12 L9.500 4Z" fill="#bfe4ff"/><path d="M9.500 4 L12 1 V10 L9.500 13Z" fill="#62b4ea"/><path d="M0 13 H9.500 L12 10 V12.500 L9.500 15.500 H0Z" fill="#e4e4e4"/><path d="M14.500 2 V13.500" stroke="#fff" stroke-width="1.200"/><path d="M12.800 4 L14.500 1 L16.200 4Z" fill="#fff"/></g><path d="M1642 400.5 H1650" stroke="#8a919d" stroke-width="1" stroke-dasharray="1 1"/><g transform="translate(1651,391)"><path d="M0 6 Q0 1.500 6 1 Q13 1.500 15.500 7.500 V12 L12 15.500 H0Z" fill="#dcdcdc"/><path d="M6 1 Q13 1.500 15.500 7.500 L12.500 10 Q11 5 4.500 3Z" fill="#8fd3ff"/><path d="M12 11 L15.500 7.500 V12 L12 15.500Z" fill="#c4c4c4"/></g><path d="M1642 420.5 H1650" stroke="#8a919d" stroke-width="1" stroke-dasharray="1 1"/><g transform="translate(1651,411)"><path d="M0 4 L3 1 H15.500 V12.500 L12.500 15.500 H0Z" fill="#e6e6e6"/><path d="M12.500 4 L15.500 1 V12.500 L12.500 15.500Z" fill="#c8c8c8"/><rect x="0.500" y="4.500" width="11.500" height="10.500" fill="#f2f2f2" stroke="#bdbdbd" stroke-width="0.600"/><rect x="2.500" y="6.500" width="7.500" height="7" fill="#3b4453"/><path d="M2.500 6.500 H5.500 V10.500 H10 V13.500 H2.500Z" fill="#6bc0fa"/><path d="M2.500 6.500 L5.500 10.500 M2.500 13.500 L5.500 10.500" stroke="#3f93d6" stroke-width="0.500"/></g><rect x="1636" y="434" width="11" height="11" fill="#3b4453"/><path d="M1646 440.5 H1650" stroke="#8a919d" stroke-width="1" stroke-dasharray="1 1"/><path d="M1637 439.5 H1645" stroke="#d4d7dc" stroke-width="1.600"/><path d="M1641 435.5 V443.5" stroke="#d4d7dc" stroke-width="1.600"/><g transform="translate(1651,431)"><path d="M0 4 L2.500 1 H12 V10 L9.500 13 H0Z" fill="#8fd3ff"/><path d="M0 4 L2.500 1 H12 L9.500 4Z" fill="#bfe4ff"/><path d="M9.500 4 L12 1 V10 L9.500 13Z" fill="#62b4ea"/><path d="M0 13 H9.500 L12 10 V12.500 L9.500 15.500 H0Z" fill="#e4e4e4"/><path d="M14.500 2 V13.500" stroke="#fff" stroke-width="1.200"/><path d="M12.800 4 L14.500 1 L16.200 4Z" fill="#fff"/></g><rect x="1636" y="454" width="11" height="11" fill="#3b4453"/><path d="M1646 460.5 H1650" stroke="#8a919d" stroke-width="1" stroke-dasharray="1 1"/><path d="M1637 459.5 H1645" stroke="#d4d7dc" stroke-width="1.600"/><path d="M1641 455.5 V463.5" stroke="#d4d7dc" stroke-width="1.600"/><g transform="translate(1651,451)"><path d="M0 4 L2.500 1 H12 V10 L9.500 13 H0Z" fill="#8fd3ff"/><path d="M0 4 L2.500 1 H12 L9.500 4Z" fill="#bfe4ff"/><path d="M9.500 4 L12 1 V10 L9.500 13Z" fill="#62b4ea"/><path d="M0 13 H9.500 L12 10 V12.500 L9.500 15.500 H0Z" fill="#e4e4e4"/><path d="M14.500 2 V13.500" stroke="#fff" stroke-width="1.200"/><path d="M12.800 4 L14.500 1 L16.200 4Z" fill="#fff"/></g><rect x="1636" y="474" width="11" height="11" fill="#3b4453"/><path d="M1646 480.5 H1650" stroke="#8a919d" stroke-width="1" stroke-dasharray="1 1"/><path d="M1637 479.5 H1645" stroke="#d4d7dc" stroke-width="1.600"/><path d="M1641 475.5 V483.5" stroke="#d4d7dc" stroke-width="1.600"/><g transform="translate(1651,471)"><path d="M0 4 L2.500 1 H12 V10 L9.500 13 H0Z" fill="#8fd3ff"/><path d="M0 4 L2.500 1 H12 L9.500 4Z" fill="#bfe4ff"/><path d="M9.500 4 L12 1 V10 L9.500 13Z" fill="#62b4ea"/><path d="M0 13 H9.500 L12 10 V12.500 L9.500 15.500 H0Z" fill="#e4e4e4"/><path d="M14.500 2 V13.500" stroke="#fff" stroke-width="1.200"/><path d="M12.800 4 L14.500 1 L16.200 4Z" fill="#fff"/></g><rect x="1636" y="494" width="11" height="11" fill="#3b4453"/><path d="M1646 500.5 H1650" stroke="#8a919d" stroke-width="1" stroke-dasharray="1 1"/><path d="M1637 499.5 H1645" stroke="#d4d7dc" stroke-width="1.600"/><path d="M1641 495.5 V503.5" stroke="#d4d7dc" stroke-width="1.600"/><g transform="translate(1651,491)"><path d="M0 4 L2.500 1 H12 V10 L9.500 13 H0Z" fill="#8fd3ff"/><path d="M0 4 L2.500 1 H12 L9.500 4Z" fill="#bfe4ff"/><path d="M9.500 4 L12 1 V10 L9.500 13Z" fill="#62b4ea"/><path d="M0 13 H9.500 L12 10 V12.500 L9.500 15.500 H0Z" fill="#e4e4e4"/><path d="M14.500 2 V13.500" stroke="#fff" stroke-width="1.200"/><path d="M12.800 4 L14.500 1 L16.200 4Z" fill="#fff"/></g><rect x="1636" y="514" width="11" height="11" fill="#3b4453"/><path d="M1646 520.5 H1650" stroke="#8a919d" stroke-width="1" stroke-dasharray="1 1"/><path d="M1637 519.5 H1645" stroke="#d4d7dc" stroke-width="1.600"/><path d="M1641 515.5 V523.5" stroke="#d4d7dc" stroke-width="1.600"/><g transform="translate(1651,511)"><path d="M0 4 L2.500 1 H12 V10 L9.500 13 H0Z" fill="#8fd3ff"/><path d="M0 4 L2.500 1 H12 L9.500 4Z" fill="#bfe4ff"/><path d="M9.500 4 L12 1 V10 L9.500 13Z" fill="#62b4ea"/><path d="M0 13 H9.500 L12 10 V12.500 L9.500 15.500 H0Z" fill="#e4e4e4"/><path d="M14.500 2 V13.500" stroke="#fff" stroke-width="1.200"/><path d="M12.800 4 L14.500 1 L16.200 4Z" fill="#fff"/></g><rect x="1636" y="534" width="11" height="11" fill="#3b4453"/><path d="M1646 540.5 H1650" stroke="#8a919d" stroke-width="1" stroke-dasharray="1 1"/><path d="M1637 539.5 H1645" stroke="#d4d7dc" stroke-width="1.600"/><path d="M1641 535.5 V543.5" stroke="#d4d7dc" stroke-width="1.600"/><g transform="translate(1651,531)"><path d="M0 4 L2.500 1 H12 V10 L9.500 13 H0Z" fill="#8fd3ff"/><path d="M0 4 L2.500 1 H12 L9.500 4Z" fill="#bfe4ff"/><path d="M9.500 4 L12 1 V10 L9.500 13Z" fill="#62b4ea"/><path d="M0 13 H9.500 L12 10 V12.500 L9.500 15.500 H0Z" fill="#e4e4e4"/><path d="M14.500 2 V13.500" stroke="#fff" stroke-width="1.200"/><path d="M12.800 4 L14.500 1 L16.200 4Z" fill="#fff"/></g><rect x="1636" y="554" width="11" height="11" fill="#3b4453"/><path d="M1646 560.5 H1650" stroke="#8a919d" stroke-width="1" stroke-dasharray="1 1"/><path d="M1637 559.5 H1645" stroke="#d4d7dc" stroke-width="1.600"/><path d="M1641 555.5 V563.5" stroke="#d4d7dc" stroke-width="1.600"/><g transform="translate(1651,551)"><path d="M0 4 L2.500 1 H12 V10 L9.500 13 H0Z" fill="#8fd3ff"/><path d="M0 4 L2.500 1 H12 L9.500 4Z" fill="#bfe4ff"/><path d="M9.500 4 L12 1 V10 L9.500 13Z" fill="#62b4ea"/><path d="M0 13 H9.500 L12 10 V12.500 L9.500 15.500 H0Z" fill="#e4e4e4"/><path d="M14.500 2 V13.500" stroke="#fff" stroke-width="1.200"/><path d="M12.800 4 L14.500 1 L16.200 4Z" fill="#fff"/></g><rect x="1636" y="574" width="11" height="11" fill="#3b4453"/><path d="M1646 580.5 H1650" stroke="#8a919d" stroke-width="1" stroke-dasharray="1 1"/><path d="M1637 579.5 H1645" stroke="#d4d7dc" stroke-width="1.600"/><path d="M1641 575.5 V583.5" stroke="#d4d7dc" stroke-width="1.600"/><g transform="translate(1651,571)"><g stroke="#dcdcdc" stroke-width="1" fill="none"><path d="M9.500 0 V13M0 14.500 H8M12 13 L15.500 9.500"/></g><rect x="8.500" y="13.500" width="2" height="2" fill="#fff"/></g><rect x="1636" y="594" width="11" height="11" fill="#3b4453"/><path d="M1646 600.5 H1650" stroke="#8a919d" stroke-width="1" stroke-dasharray="1 1"/><path d="M1637 599.5 H1645" stroke="#d4d7dc" stroke-width="1.600"/><path d="M1641 595.5 V603.5" stroke="#d4d7dc" stroke-width="1.600"/><g transform="translate(1651,591)"><path d="M0 4 L2.500 1 H12 V10 L9.500 13 H0Z" fill="#8fd3ff"/><path d="M0 4 L2.500 1 H12 L9.500 4Z" fill="#bfe4ff"/><path d="M9.500 4 L12 1 V10 L9.500 13Z" fill="#62b4ea"/><path d="M0 13 H9.500 L12 10 V12.500 L9.500 15.500 H0Z" fill="#e4e4e4"/><path d="M14.500 2 V13.500" stroke="#fff" stroke-width="1.200"/><path d="M12.800 4 L14.500 1 L16.200 4Z" fill="#fff"/></g><rect x="1636" y="614" width="11" height="11" fill="#3b4453"/><path d="M1646 620.5 H1650" stroke="#8a919d" stroke-width="1" stroke-dasharray="1 1"/><path d="M1637 619.5 H1645" stroke="#d4d7dc" stroke-width="1.600"/><path d="M1641 615.5 V623.5" stroke="#d4d7dc" stroke-width="1.600"/><g transform="translate(1651,611)"><path d="M0 4 L2.500 1 H12 V10 L9.500 13 H0Z" fill="#8fd3ff"/><path d="M0 4 L2.500 1 H12 L9.500 4Z" fill="#bfe4ff"/><path d="M9.500 4 L12 1 V10 L9.500 13Z" fill="#62b4ea"/><path d="M0 13 H9.500 L12 10 V12.500 L9.500 15.500 H0Z" fill="#e4e4e4"/><path d="M14.500 2 V13.500" stroke="#fff" stroke-width="1.200"/><path d="M12.800 4 L14.500 1 L16.200 4Z" fill="#fff"/></g><path d="M1642 640.5 H1650" stroke="#8a919d" stroke-width="1" stroke-dasharray="1 1"/><g transform="translate(1651,631)"><g stroke="#e8e8e8" stroke-width="1" fill="none"><path d="M6.500 2.500 H12.500 M14.500 5 V12.500 M5 14.500 H12.500 M2.500 7 V12.500"/></g><g fill="#ffffff"><rect x="13.500" y="1.500" width="2" height="2"/><rect x="1.500" y="13.500" width="2" height="2"/><rect x="13.500" y="13.500" width="2" height="2"/></g><path d="M1 0.500 H5.500 L4.500 2 V3.500 L6 5 H0.500 L2 3.500 V2Z" fill="#ffffff"/><path d="M3.500 5 V9" stroke="#fff" stroke-width="1"/></g><path d="M1642 660.5 H1650" stroke="#8a919d" stroke-width="1" stroke-dasharray="1 1"/><g transform="translate(1651,651)"><g stroke="#e8e8e8" stroke-width="1" fill="none"><path d="M4 1.500 H11.500 M1.500 4 V11 M13.500 4 V7 M4 13.500 H7"/></g><g fill="#ffffff"><rect x="0.500" y="0.500" width="2" height="2"/><rect x="12.500" y="0.500" width="2" height="2"/><rect x="0.500" y="12.500" width="2" height="2"/></g><path d="M14 7.500 L8.500 11 L14 15" stroke="#a8a8a8" stroke-width="1.300" fill="none"/><circle cx="14" cy="7.500" r="2.100" fill="#a8a8a8"/><circle cx="8.500" cy="11" r="2.100" fill="#a8a8a8"/><circle cx="14" cy="15" r="2.100" fill="#a8a8a8"/></g><rect x="1636" y="674" width="11" height="11" fill="#3b4453"/><path d="M1646 680.5 H1650" stroke="#8a919d" stroke-width="1" stroke-dasharray="1 1"/><path d="M1637 679.5 H1645" stroke="#d4d7dc" stroke-width="1.600"/><path d="M1641 675.5 V683.5" stroke="#d4d7dc" stroke-width="1.600"/><g transform="translate(1651,671)"><path d="M0 4 L2.500 1 H12 V10 L9.500 13 H0Z" fill="#8fd3ff"/><path d="M0 4 L2.500 1 H12 L9.500 4Z" fill="#bfe4ff"/><path d="M9.500 4 L12 1 V10 L9.500 13Z" fill="#62b4ea"/><path d="M0 13 H9.500 L12 10 V12.500 L9.500 15.500 H0Z" fill="#e4e4e4"/><path d="M14.500 2 V13.500" stroke="#fff" stroke-width="1.200"/><path d="M12.800 4 L14.500 1 L16.200 4Z" fill="#fff"/></g><rect x="1636" y="694" width="11" height="11" fill="#3b4453"/><path d="M1646 700.5 H1650" stroke="#8a919d" stroke-width="1" stroke-dasharray="1 1"/><path d="M1637 699.5 H1645" stroke="#d4d7dc" stroke-width="1.600"/><path d="M1641 695.5 V703.5" stroke="#d4d7dc" stroke-width="1.600"/><g transform="translate(1651,691)"><path d="M0 4 L2.500 1 H12 V10 L9.500 13 H0Z" fill="#8fd3ff"/><path d="M0 4 L2.500 1 H12 L9.500 4Z" fill="#bfe4ff"/><path d="M9.500 4 L12 1 V10 L9.500 13Z" fill="#62b4ea"/><path d="M0 13 H9.500 L12 10 V12.500 L9.500 15.500 H0Z" fill="#e4e4e4"/><path d="M14.500 2 V13.500" stroke="#fff" stroke-width="1.200"/><path d="M12.800 4 L14.500 1 L16.200 4Z" fill="#fff"/></g><rect x="1636" y="714" width="11" height="11" fill="#3b4453"/><path d="M1646 720.5 H1650" stroke="#8a919d" stroke-width="1" stroke-dasharray="1 1"/><path d="M1637 719.5 H1645" stroke="#d4d7dc" stroke-width="1.600"/><path d="M1641 715.5 V723.5" stroke="#d4d7dc" stroke-width="1.600"/><g transform="translate(1651,711)"><path d="M0 4 L2.500 1 H12 V10 L9.500 13 H0Z" fill="#8fd3ff"/><path d="M0 4 L2.500 1 H12 L9.500 4Z" fill="#bfe4ff"/><path d="M9.500 4 L12 1 V10 L9.500 13Z" fill="#62b4ea"/><path d="M0 13 H9.500 L12 10 V12.500 L9.500 15.500 H0Z" fill="#e4e4e4"/><path d="M14.500 2 V13.500" stroke="#fff" stroke-width="1.200"/><path d="M12.800 4 L14.500 1 L16.200 4Z" fill="#fff"/></g><rect x="1636" y="734" width="11" height="11" fill="#3b4453"/><path d="M1646 740.5 H1650" stroke="#8a919d" stroke-width="1" stroke-dasharray="1 1"/><path d="M1637 739.5 H1645" stroke="#d4d7dc" stroke-width="1.600"/><path d="M1641 735.5 V743.5" stroke="#d4d7dc" stroke-width="1.600"/><g transform="translate(1651,731)"><path d="M7 1.500 V15 H0Z" fill="#e0e0e0"/><path d="M8.500 1.500 V15 H15.500Z" fill="#8fd3ff"/></g><rect x="1636" y="754" width="11" height="11" fill="#3b4453"/><path d="M1646 760.5 H1650" stroke="#8a919d" stroke-width="1" stroke-dasharray="1 1"/><path d="M1637 759.5 H1645" stroke="#d4d7dc" stroke-width="1.600"/><path d="M1641 755.5 V763.5" stroke="#d4d7dc" stroke-width="1.600"/><g transform="translate(1651,751)"><path d="M0 4 L2.500 1 H12 V10 L9.500 13 H0Z" fill="#8fd3ff"/><path d="M0 4 L2.500 1 H12 L9.500 4Z" fill="#bfe4ff"/><path d="M9.500 4 L12 1 V10 L9.500 13Z" fill="#62b4ea"/><path d="M0 13 H9.500 L12 10 V12.500 L9.500 15.500 H0Z" fill="#e4e4e4"/><path d="M14.500 2 V13.500" stroke="#fff" stroke-width="1.200"/><path d="M12.800 4 L14.500 1 L16.200 4Z" fill="#fff"/></g><rect x="1636" y="774" width="11" height="11" fill="#3b4453"/><path d="M1646 780.5 H1650" stroke="#8a919d" stroke-width="1" stroke-dasharray="1 1"/><path d="M1637 779.5 H1645" stroke="#d4d7dc" stroke-width="1.600"/><path d="M1641 775.5 V783.5" stroke="#d4d7dc" stroke-width="1.600"/><g transform="translate(1651,771)"><g stroke="#dcdcdc" stroke-width="1" fill="none"><path d="M9.500 0 V13M0 14.500 H8M12 13 L15.500 9.500"/></g><rect x="8.500" y="13.500" width="2" height="2" fill="#fff"/></g><rect x="1636" y="794" width="11" height="11" fill="#3b4453"/><path d="M1646 800.5 H1650" stroke="#8a919d" stroke-width="1" stroke-dasharray="1 1"/><path d="M1637 799.5 H1645" stroke="#d4d7dc" stroke-width="1.600"/><path d="M1641 795.5 V803.5" stroke="#d4d7dc" stroke-width="1.600"/><g transform="translate(1651,791)"><path d="M0 6.500 Q8 2.500 16 6.500 V12 L13.500 14.500 Q8 11.500 2.500 14.500 L0 12Z" fill="#8fd3ff"/><path d="M0 6.500 Q8 2.500 16 6.500 L13.500 8.500 Q8 6 2.500 8.500Z" fill="#bfe4ff"/><path d="M16 6.500 V12 L13.500 14.500 V8.500Z" fill="#d8d8d8"/><path d="M1.500 3.500 Q8 -0.500 15 3.500" stroke="#fff" stroke-width="1.200" fill="none"/><path d="M0.500 4.500 L3.500 1.500 L3.500 5Z" fill="#fff"/></g><path d="M1642 820.5 H1650" stroke="#8a919d" stroke-width="1" stroke-dasharray="1 1"/><g transform="translate(1651,811)"><g stroke="#e8e8e8" stroke-width="1" fill="none"><path d="M6.500 2.500 H12.500 M14.500 5 V12.500 M5 14.500 H12.500 M2.500 7 V12.500"/></g><g fill="#ffffff"><rect x="13.500" y="1.500" width="2" height="2"/><rect x="1.500" y="13.500" width="2" height="2"/><rect x="13.500" y="13.500" width="2" height="2"/></g><path d="M1 0.500 H5.500 L4.500 2 V3.500 L6 5 H0.500 L2 3.500 V2Z" fill="#ffffff"/><path d="M3.500 5 V9" stroke="#fff" stroke-width="1"/></g><rect x="1636" y="834" width="11" height="11" fill="#3b4453"/><path d="M1646 840.5 H1650" stroke="#8a919d" stroke-width="1" stroke-dasharray="1 1"/><path d="M1637 839.5 H1645" stroke="#d4d7dc" stroke-width="1.600"/><path d="M1641 835.5 V843.5" stroke="#d4d7dc" stroke-width="1.600"/><g transform="translate(1651,831)"><path d="M0 4 L2.500 1 H12 V10 L9.500 13 H0Z" fill="#8fd3ff"/><path d="M0 4 L2.500 1 H12 L9.500 4Z" fill="#bfe4ff"/><path d="M9.500 4 L12 1 V10 L9.500 13Z" fill="#62b4ea"/><path d="M0 13 H9.500 L12 10 V12.500 L9.500 15.500 H0Z" fill="#e4e4e4"/><path d="M14.500 2 V13.500" stroke="#fff" stroke-width="1.200"/><path d="M12.800 4 L14.500 1 L16.200 4Z" fill="#fff"/></g><rect x="1636" y="854" width="11" height="11" fill="#3b4453"/><path d="M1646 860.5 H1650" stroke="#8a919d" stroke-width="1" stroke-dasharray="1 1"/><path d="M1637 859.5 H1645" stroke="#d4d7dc" stroke-width="1.600"/><path d="M1641 855.5 V863.5" stroke="#d4d7dc" stroke-width="1.600"/><g transform="translate(1651,851)"><circle cx="12.9145" cy="10.6848" r="1.900" fill="#6bc0fa"/><circle cx="8.13215" cy="13.5984" r="1.900" fill="#6bc0fa"/><circle cx="3.21768" cy="10.9137" r="1.900" fill="#6bc0fa"/><circle cx="3.08553" cy="5.31523" r="1.900" fill="#6bc0fa"/><circle cx="7.86784" cy="2.40156" r="1.900" fill="#6bc0fa"/><circle cx="12.7823" cy="5.08632" r="1.900" fill="#6bc0fa"/></g><rect x="1636" y="874" width="11" height="11" fill="#3b4453"/><path d="M1646 880.5 H1650" stroke="#8a919d" stroke-width="1" stroke-dasharray="1 1"/><path d="M1637 879.5 H1645" stroke="#d4d7dc" stroke-width="1.600"/><path d="M1641 875.5 V883.5" stroke="#d4d7dc" stroke-width="1.600"/><g transform="translate(1651,871)"><path d="M7 1.500 V15 H0Z" fill="#e0e0e0"/><path d="M8.500 1.500 V15 H15.500Z" fill="#8fd3ff"/></g><rect x="1636" y="894" width="11" height="11" fill="#3b4453"/><path d="M1646 900.5 H1650" stroke="#8a919d" stroke-width="1" stroke-dasharray="1 1"/><path d="M1637 899.5 H1645" stroke="#d4d7dc" stroke-width="1.600"/><path d="M1641 895.5 V903.5" stroke="#d4d7dc" stroke-width="1.600"/><g transform="translate(1651,891)"><path d="M7 1.500 V15 H0Z" fill="#e0e0e0"/><path d="M8.500 1.500 V15 H15.500Z" fill="#8fd3ff"/></g><path d="M1642 920.5 H1650" stroke="#8a919d" stroke-width="1" stroke-dasharray="1 1"/><g transform="translate(1651,911)"><g stroke="#e8e8e8" stroke-width="1" fill="none"><path d="M4 1.500 H11.500 M1.500 4 V11 M13.500 4 V7 M4 13.500 H7"/></g><g fill="#ffffff"><rect x="0.500" y="0.500" width="2" height="2"/><rect x="12.500" y="0.500" width="2" height="2"/><rect x="0.500" y="12.500" width="2" height="2"/></g><path d="M14 7.500 L8.500 11 L14 15" stroke="#a8a8a8" stroke-width="1.300" fill="none"/><circle cx="14" cy="7.500" r="2.100" fill="#a8a8a8"/><circle cx="8.500" cy="11" r="2.100" fill="#a8a8a8"/><circle cx="14" cy="15" r="2.100" fill="#a8a8a8"/></g><path d="M1642 940.5 H1650" stroke="#8a919d" stroke-width="1" stroke-dasharray="1 1"/><g transform="translate(1651,931)"><g stroke="#e8e8e8" stroke-width="1" fill="none"><path d="M4 1.500 H11.500 M1.500 4 V11 M13.500 4 V7 M4 13.500 H7"/></g><g fill="#ffffff"><rect x="0.500" y="0.500" width="2" height="2"/><rect x="12.500" y="0.500" width="2" height="2"/><rect x="0.500" y="12.500" width="2" height="2"/></g><path d="M14 7.500 L8.500 11 L14 15" stroke="#a8a8a8" stroke-width="1.300" fill="none"/><circle cx="14" cy="7.500" r="2.100" fill="#a8a8a8"/><circle cx="8.500" cy="11" r="2.100" fill="#a8a8a8"/><circle cx="14" cy="15" r="2.100" fill="#a8a8a8"/></g><rect x="1636" y="954" width="11" height="11" fill="#3b4453"/><path d="M1646 960.5 H1650" stroke="#8a919d" stroke-width="1" stroke-dasharray="1 1"/><path d="M1637 959.5 H1645" stroke="#d4d7dc" stroke-width="1.600"/><path d="M1641 955.5 V963.5" stroke="#d4d7dc" stroke-width="1.600"/><g transform="translate(1651,951)"><g stroke="#dcdcdc" stroke-width="1" fill="none"><path d="M9.500 0 V13M0 14.500 H8M12 13 L15.500 9.500"/></g><rect x="8.500" y="13.500" width="2" height="2" fill="#fff"/></g><rect x="1636" y="974" width="11" height="11" fill="#3b4453"/><path d="M1646 980.5 H1650" stroke="#8a919d" stroke-width="1" stroke-dasharray="1 1"/><path d="M1637 979.5 H1645" stroke="#d4d7dc" stroke-width="1.600"/><path d="M1641 975.5 V983.5" stroke="#d4d7dc" stroke-width="1.600"/><g transform="translate(1651,971)"><path d="M0 4 L2.500 1 H12 V10 L9.500 13 H0Z" fill="#8fd3ff"/><path d="M0 4 L2.500 1 H12 L9.500 4Z" fill="#bfe4ff"/><path d="M9.500 4 L12 1 V10 L9.500 13Z" fill="#62b4ea"/><path d="M0 13 H9.500 L12 10 V12.500 L9.500 15.500 H0Z" fill="#e4e4e4"/><path d="M14.500 2 V13.500" stroke="#fff" stroke-width="1.200"/><path d="M12.800 4 L14.500 1 L16.200 4Z" fill="#fff"/></g><rect x="1636" y="994" width="11" height="11" fill="#3b4453"/><path d="M1646 1000.5 H1650" stroke="#8a919d" stroke-width="1" stroke-dasharray="1 1"/><path d="M1637 999.5 H1645" stroke="#d4d7dc" stroke-width="1.600"/><path d="M1641 995.5 V1003.5" stroke="#d4d7dc" stroke-width="1.600"/><g transform="translate(1651,991)"><path d="M0 4 L2.500 1 H12 V10 L9.500 13 H0Z" fill="#8fd3ff"/><path d="M0 4 L2.500 1 H12 L9.500 4Z" fill="#bfe4ff"/><path d="M9.500 4 L12 1 V10 L9.500 13Z" fill="#62b4ea"/><path d="M0 13 H9.500 L12 10 V12.500 L9.500 15.500 H0Z" fill="#e4e4e4"/><path d="M14.500 2 V13.500" stroke="#fff" stroke-width="1.200"/><path d="M12.800 4 L14.500 1 L16.200 4Z" fill="#fff"/></g><rect x="1636" y="1014" width="11" height="11" fill="#3b4453"/><path d="M1646 1020.5 H1650" stroke="#8a919d" stroke-width="1" stroke-dasharray="1 1"/><path d="M1637 1019.5 H1645" stroke="#d4d7dc" stroke-width="1.600"/><path d="M1641 1015.5 V1023.5" stroke="#d4d7dc" stroke-width="1.600"/><g transform="translate(1651,1011)"><path d="M7 1.500 V15 H0Z" fill="#e0e0e0"/><path d="M8.500 1.500 V15 H15.500Z" fill="#8fd3ff"/></g><rect x="1636" y="1034" width="11" height="11" fill="#3b4453"/><path d="M1646 1040.5 H1650" stroke="#8a919d" stroke-width="1" stroke-dasharray="1 1"/><path d="M1637 1039.5 H1645" stroke="#d4d7dc" stroke-width="1.600"/><path d="M1641 1035.5 V1043.5" stroke="#d4d7dc" stroke-width="1.600"/><g transform="translate(1651,1031)"><path d="M7 1.500 V15 H0Z" fill="#e0e0e0"/><path d="M8.500 1.500 V15 H15.500Z" fill="#8fd3ff"/></g><rect x="1656" y="1053" width="1" height="1" fill="#cfcfcf"/><rect x="1659" y="1053" width="1" height="1" fill="#cfcfcf"/></svg>
<div class="r" style="left:277px;top:144px;width:1351px;height:887px;background:#ffffff;"></div>
<svg class="r" style="left:277px;top:144px;" width="1351" height="887" viewBox="277 144 1351 887"><defs><linearGradient id="gUp" gradientUnits="userSpaceOnUse" x1="0" y1="262" x2="0" y2="534"><stop offset="0" stop-color="#68686f"/><stop offset="0.08" stop-color="#606067"/><stop offset="0.17" stop-color="#56565b"/><stop offset="0.32" stop-color="#48484c"/><stop offset="0.42" stop-color="#424246"/><stop offset="0.48" stop-color="#404044"/><stop offset="0.54" stop-color="#424246"/><stop offset="0.62" stop-color="#48484c"/><stop offset="0.77" stop-color="#55555a"/><stop offset="0.91" stop-color="#5f5f63"/><stop offset="1" stop-color="#646468"/></linearGradient><linearGradient id="gLo" x1="0" y1="0" x2="0" y2="1"><stop offset="0" stop-color="#69696d"/><stop offset="0.25" stop-color="#56565a"/><stop offset="0.45" stop-color="#444448"/><stop offset="0.55" stop-color="#404044"/><stop offset="0.70" stop-color="#4b4b50"/><stop offset="0.88" stop-color="#5d5d63"/><stop offset="1" stop-color="#6b6b73"/></linearGradient><linearGradient id="gP1" x1="0" y1="0" x2="1" y2="0"><stop offset="0" stop-color="#4a4a4e"/><stop offset="0.15" stop-color="#5a5a5e"/><stop offset="0.55" stop-color="#8a8a8e"/><stop offset="1" stop-color="#a0a0a4"/></linearGradient><linearGradient id="gP2" x1="0" y1="0" x2="1" y2="0"><stop offset="0" stop-color="#9c9ca0"/><stop offset="0.35" stop-color="#a0a0a4"/><stop offset="0.75" stop-color="#88888c"/><stop offset="1" stop-color="#6c6c70"/></linearGradient><linearGradient id="gP3" x1="0" y1="0" x2="1" y2="0"><stop offset="0" stop-color="#4a4a4e"/><stop offset="0.2" stop-color="#5c5c60"/><stop offset="0.65" stop-color="#88888c"/><stop offset="1" stop-color="#98989c"/></linearGradient><linearGradient id="gP4" x1="0" y1="0" x2="1" y2="0"><stop offset="0" stop-color="#a4a4a8"/><stop offset="0.45" stop-color="#a0a0a4"/><stop offset="0.85" stop-color="#8c8c90"/><stop offset="1" stop-color="#7c7c80"/></linearGradient><linearGradient id="gSh" x1="0" y1="0" x2="0" y2="1"><stop offset="0" stop-color="#a6a6aa"/><stop offset="0.3" stop-color="#98989c"/><stop offset="0.55" stop-color="#6e6e72"/><stop offset="0.8" stop-color="#454549"/><stop offset="1" stop-color="#4c4c50"/></linearGradient><linearGradient id="gVC" x1="0" y1="0" x2="0" y2="1"><stop offset="0" stop-color="#f4f4f4"/><stop offset="1" stop-color="#dadada"/></linearGradient><radialGradient id="gSd" cx="0.5" cy="0.5" r="0.5"><stop offset="0" stop-color="#9a9a9a" stop-opacity="0.75"/><stop offset="0.6" stop-color="#b0b0b0" stop-opacity="0.45"/><stop offset="1" stop-color="#ffffff" stop-opacity="0"/></radialGradient><radialGradient id="gBall" cx="0.35" cy="0.3" r="0.8"><stop offset="0" stop-color="#f0f6ff"/><stop offset="1" stop-color="#8aa6e0"/></radialGradient></defs><rect x="724" y="261" width="460" height="360" fill="url(#gUp)"/><rect x="724" y="261" width="460" height="3" fill="#4b4b4f"/><rect x="724" y="261.500" width="460" height="1" fill="#77777b"/><rect x="724" y="721" width="460" height="205.500" fill="url(#gLo)"/><rect x="724" y="925.500" width="460" height="1.200" fill="#3c3c40"/><path d="M725 477 C729 505 752 531 785 534 L785 594.2 L725 578.6 Z" fill="url(#gP1)"/><path d="M725 477 C729 505 752 531 785 534" fill="none" stroke="#3e3e42" stroke-width="1"/><rect x="785" y="534" width="4.500" height="60.8" fill="#8c8c90"/><path d="M785.500 534 V594.2 M789.500 522 V595.3" stroke="#3e3e42" stroke-width="1" fill="none"/><path d="M785 534.500 H789.500" stroke="#3e3e42" stroke-width="1"/><path d="M789.500 522 C815 514 835 494 842 467 L842 609.1 L789.500 595.4 Z" fill="url(#gP2)"/><path d="M789.500 522 C815 514 835 494 842 467" fill="none" stroke="#3e3e42" stroke-width="1"/><path d="M1118.500 522 C1093 514 1073 494 1066 467 L1066 609.1 L1118.500 595.4 Z" fill="url(#gP3)"/><path d="M1118.500 522 C1093 514 1073 494 1066 467" fill="none" stroke="#3e3e42" stroke-width="1"/><rect x="1118.500" y="534" width="4.500" height="60.8" fill="#b0b0b4"/><path d="M1118.500 522 V595.4 M1122.500 534 V594.4" stroke="#3e3e42" stroke-width="1" fill="none"/><path d="M1118.500 534.500 H1123" stroke="#3e3e42" stroke-width="1"/><path d="M1183 477 C1179 505 1156 531 1123 534 L1123 594.2 L1183 578.6 Z" fill="url(#gP4)"/><path d="M1183 477 C1179 505 1156 531 1123 534" fill="none" stroke="#3e3e42" stroke-width="1"/><rect x="842" y="467" width="224" height="17" fill="#9b9b9f"/><rect x="842" y="484" width="224" height="46" fill="#858589"/><rect x="842" y="530" width="224" height="67" fill="#66666a"/><path d="M842 609.1 L842 597 H1066 V609.1 L954 638.500 Z" fill="#424246"/><path d="M842 467.500 H1066" stroke="#3e3e42" stroke-width="1"/><path d="M842 484 H1066" stroke="#5a5a5e" stroke-width="0.800"/><path d="M842 530 H1066" stroke="#3e3e42" stroke-width="1.200"/><path d="M842 597 H1066" stroke="#8e8e92" stroke-width="1"/><path d="M842 596 H1066" stroke="#4a4a4e" stroke-width="0.800"/><path d="M842.500 467 V609.1 M1065.500 467 V609.1" stroke="#3e3e42" stroke-width="1"/><path d="M725 578.600 L954 638.300 L1183 578.600 V721 H725 Z" fill="#808084"/><path d="M725 578.600 L954 638.300 L1183 578.600" fill="none" stroke="#3e3e42" stroke-width="1"/><rect x="951" y="465" width="6" height="173.500" fill="#8a8a8e"/><path d="M951.500 465 V637.800 M956.500 465 V637.800 M951 465.500 H957" stroke="#3e3e42" stroke-width="1" fill="none"/><path d="M954 466 V638" stroke="#9c9ca0" stroke-width="1"/><path d="M724 721 H1184" stroke="#3e3e42" stroke-width="2"/><path d="M703.6 260 Q703.6 258 705.6 258 H722.4 Q724.4 258 724.4 260 V928.500 H703.6 Z" fill="#808084" stroke="#3e3e42" stroke-width="1.300"/><path d="M1183.6 260 Q1183.6 258 1185.6 258 H1202.4 Q1204.4 258 1204.4 260 V928.500 H1183.6 Z" fill="#808084" stroke="#3e3e42" stroke-width="1.300"/><path d="M703.300 259 V928.500" stroke="#444448" stroke-width="1.600"/><path d="M1204.700 259 V928.500" stroke="#444448" stroke-width="1.600"/><path d="M724.800 262 V926 M1183.200 262 V926" stroke="#48484c" stroke-width="1.400"/><ellipse cx="714" cy="431" rx="3.300" ry="4.200" fill="#808084" stroke="#4a4a4e" stroke-width="0.900"/><ellipse cx="714" cy="756" rx="3.300" ry="4.200" fill="#808084" stroke="#4a4a4e" stroke-width="0.900"/><ellipse cx="1193.5" cy="431" rx="3.300" ry="4.200" fill="#808084" stroke="#4a4a4e" stroke-width="0.900"/><ellipse cx="1193.5" cy="756" rx="3.300" ry="4.200" fill="#808084" stroke="#4a4a4e" stroke-width="0.900"/><rect x="644" y="644" width="59" height="25" fill="url(#gSh)" stroke="#3e3e42" stroke-width="1"/><rect x="644.500" y="653.500" width="37" height="7" fill="#7e7e82" stroke="#3e3e42" stroke-width="0.900"/><rect x="1205" y="644" width="58.500" height="25" fill="url(#gSh)" stroke="#3e3e42" stroke-width="1"/><rect x="1226" y="653.500" width="37" height="7" fill="#7e7e82" stroke="#3e3e42" stroke-width="0.900"/><g stroke="#00008b" stroke-width="1" fill="none"><path d="M724.500 175 V248 M1183.500 175 V248 M725 202.500 H906 M1001 202.500 H1183"/><path d="M642 261.500 H710 M642 721.500 H711 M670.500 262 V444 M670.500 539 V721 M1204.500 943 V1000"/></g><path d="M725 202.500 L747 197.500 V207.500 Z M1183 202.500 L1161 197.500 V207.500 Z M670.500 262 L665.500 284 H675.500 Z M670.500 721 L665.500 699 H675.500 Z" fill="#00008b"/><text x="954.600" y="216.800" font-size="37.800" style="font-family:&quot;DejaVu Sans Condensed&quot;,&quot;DejaVu Sans&quot;,sans-serif" fill="#00008b" text-anchor="middle" textLength="82.500" lengthAdjust="spacingAndGlyphs">1130</text><text transform="translate(683.900,491.800) rotate(-90)" font-size="37.800" style="font-family:&quot;DejaVu Sans Condensed&quot;,&quot;DejaVu Sans&quot;,sans-serif" fill="#00008b" text-anchor="middle" textLength="82.500" lengthAdjust="spacingAndGlyphs">1130</text><path d="M329.500 978 V958" stroke="#00aa00" stroke-width="1.200"/><path d="M329.500 949 L335 958.500 H324 Z" fill="#008800"/><path d="M329 978.500 H349" stroke="#0000cc" stroke-width="1.200"/><path d="M358.800 978.500 L349 973 V984 Z" fill="#000090"/><circle cx="329.300" cy="978.300" r="5.200" fill="#8b0000"/><text x="329.500" y="946.800" font-size="11.500" fill="#22dd22" text-anchor="middle">Y</text><text x="365.600" y="982.600" font-size="11.500" fill="#3c3cff" text-anchor="middle">Z</text><g stroke="#444" stroke-width="1.200" fill="none"><rect x="1594.600" y="151" width="11" height="9.500"/><path d="M1594 150.800 H1606.200" stroke-width="1.800"/><path d="M1600.500 151 V160.500 M1600.500 155.500 H1605.600"/></g><path d="M1615.500 150.500 L1625.500 160.500 M1625.500 150.500 L1615.500 160.500" stroke="#444" stroke-width="1.500"/><ellipse cx="1566" cy="260.500" rx="46" ry="6" fill="url(#gSd)"/><rect x="1539.500" y="203.500" width="53" height="53" fill="url(#gVC)" stroke="#8c8c8c" stroke-width="1"/><rect x="1549" y="213" width="34" height="34" fill="#dcdde0"/><text x="1566.300" y="235" font-size="15.500" font-weight="bold" fill="#8f949c" text-anchor="middle" textLength="25.500" lengthAdjust="spacingAndGlyphs">LEFT</text><rect x="1593.500" y="289.500" width="33" height="320.500" rx="5" fill="#f4f4f4" stroke="#c6c6c6" stroke-width="2"/><g fill="none" stroke="#a6a6a6" stroke-width="1.200"><circle cx="1618.900" cy="296" r="3.300" fill="#d0d0d0"/><path d="M1617 294.200 L1620.800 297.800 M1620.800 294.200 L1617 297.800" stroke="#f4f4f4" stroke-width="1"/><path d="M1599 321.500 A11 11 0 0 1 1610 310.500 H1621 V321.500 A11 11 0 0 1 1599 321.500 Z" fill="#e4e4e6"/><circle cx="1610" cy="321.500" r="6" fill="#f0f0f2"/><path d="M1605.800 325.800 L1602.500 329.500 M1614.200 325.800 L1617.500 329.500"/><path d="M1597 350.500 H1623" stroke="#c8c8c8" stroke-width="1"/><path d="M1598.500 369.500 Q1599.500 367.500 1601.500 368.500 L1605.500 371.500 L1603.300 361.500 Q1603.800 359.800 1605.500 360.300 L1608.800 367.500 L1608.500 358 Q1609.500 356.600 1611 357.800 L1612.800 367.500 L1613.800 359.300 Q1615 358 1616.200 359.300 L1616 369.500 L1618.800 364 Q1620 363 1621 364.300 Q1619.500 372.500 1616.500 376 L1613.500 379.800 H1606.500 Q1603.500 376.500 1598.500 369.500 Z" fill="#ececee"/><path d="M1603.500 390 V400 M1598.500 395 H1608.500" stroke-width="1.800"/><path d="M1598.500 404 H1608.500" stroke-width="1.800"/><circle cx="1614" cy="403" r="4.200" fill="#e8eef2"/><path d="M1617 406.500 L1621.500 411" stroke-width="2"/><ellipse cx="1609.500" cy="443" rx="10.500" ry="4"/><ellipse cx="1609.500" cy="441" rx="4" ry="10.500"/><path d="M1608 441 H1611 M1609.500 439.500 V442.500"/><path d="M1598.500 480 L1604.500 473.500 V477.500 L1614 475.500 V480 Z" fill="#e8e8ea"/><rect x="1598.500" y="480" width="22" height="15" fill="#ececee"/><rect x="1602.500" y="485.500" width="14" height="5.500" fill="#d4d4d8"/><path d="M1602.500 509 V505.500 H1606 M1614 505.500 H1617.500 V509 M1617.500 516.500 V520 H1614 M1606 520 H1602.500 V516.500" /><path d="M1605 513 H1617" stroke="#7a7a7a" stroke-width="1.400"/><path d="M1604.200 513 L1608 510.500 V515.500 Z" fill="#7a7a7a" stroke="none"/><path d="M1602.500 534.500 L1606.500 530 H1617.500 V540 L1613.500 544.500 H1602.500 Z M1602.500 534.500 H1613.500 V544.500 M1613.500 534.500 L1617.500 530" fill="#ececee"/><path d="M1602.500 539.500 H1608 V544.500"/><path d="M1606.500 569.500 L1609 567 H1617.500 V574.500 L1615 577.500 H1606.500 Z" fill="#ececee"/><path d="M1615 570 L1617.500 567 M1606.500 570 H1615 V577.500"/><circle cx="1606.500" cy="568" r="4.800" fill="url(#gBall)" stroke="#8aa0d8"/><circle cx="1618.900" cy="602.800" r="3.300" fill="#d0d0d0"/><path d="M1617 602.800 H1620.800" stroke="#f4f4f4" stroke-width="1.200"/></g><path d="M1606.500 342.5 H1612.500 L1609.500 345.8 Z" fill="#8a8a8a"/><path d="M1606.500 420.5 H1612.500 L1609.500 423.8 Z" fill="#8a8a8a"/><path d="M1606.500 463 H1612.500 L1609.500 466.3 Z" fill="#8a8a8a"/><path d="M1606.500 553 H1612.500 L1609.500 556.3 Z" fill="#8a8a8a"/><path d="M1606.500 586.5 H1612.500 L1609.500 589.8 Z" fill="#8a8a8a"/></svg>
<div class="r" style="left:277px;top:1031px;width:1351px;height:24px;background:#222933;"></div>
<div class="r" style="left:277px;top:1031px;width:150px;height:21px;background:#3b4453;"></div>
<div class="r" style="left:277px;top:1052px;width:150px;height:3px;background:#2fa7e0;"></div>
<span class="t" style="left:285.30px;top:1035.65px;font-size:11.75px;line-height:11.75px;color:#ffffff;letter-spacing:-0.256px;">BLOWER - NICOT...ipt</span>
<svg class="r" style="left:400px;top:1031px;" width="20" height="20" viewBox="0 0 20 20"><path d="M6.500 5.500 L13.500 12.500 M13.500 5.500 L6.500 12.500" stroke="#c8ccd2" stroke-width="1.300"/></svg>
<div class="r" style="left:1609px;top:1037px;width:14px;height:2px;background:#c8c8c8;"></div>
<div class="r" style="left:1609px;top:1042px;width:14px;height:2px;background:#c8c8c8;"></div>
<div class="r" style="left:1609px;top:1047px;width:14px;height:2px;background:#c8c8c8;"></div>
<div class="r" style="left:0px;top:1055px;width:1920px;height:25px;background:#2f3541;"></div>
<span class="t" style="left:2.00px;top:1062.48px;font-size:11.25px;line-height:11.25px;color:#f0f0f0;letter-spacing:-0.304px;">Ready</span>
<div class="r" style="left:1841px;top:1057px;width:1px;height:21px;background:#b8bcc4;"></div>
<div class="r" style="left:1881px;top:1057px;width:1px;height:21px;background:#b8bcc4;"></div>
<div class="r" style="left:1918px;top:1057px;width:2px;height:21px;background:#b8bcc4;"></div>
<span class="t" style="left:1850.66px;top:1062.34px;font-size:12px;line-height:12px;color:#f0f0f0;">1</span>
<span class="t" style="left:1888.16px;top:1062.34px;font-size:12px;line-height:12px;color:#f0f0f0;">1</span>
<div class="r" style="left:0px;top:1078px;width:1920px;height:2px;background:#1e222b;"></div>
<div class="r" style="left:48px;top:1078px;width:288px;height:2px;background:#ffffff;"></div>
<div class="r" style="left:632px;top:1078px;width:48px;height:2px;background:#8a8a8a;"></div>
</body></html>
